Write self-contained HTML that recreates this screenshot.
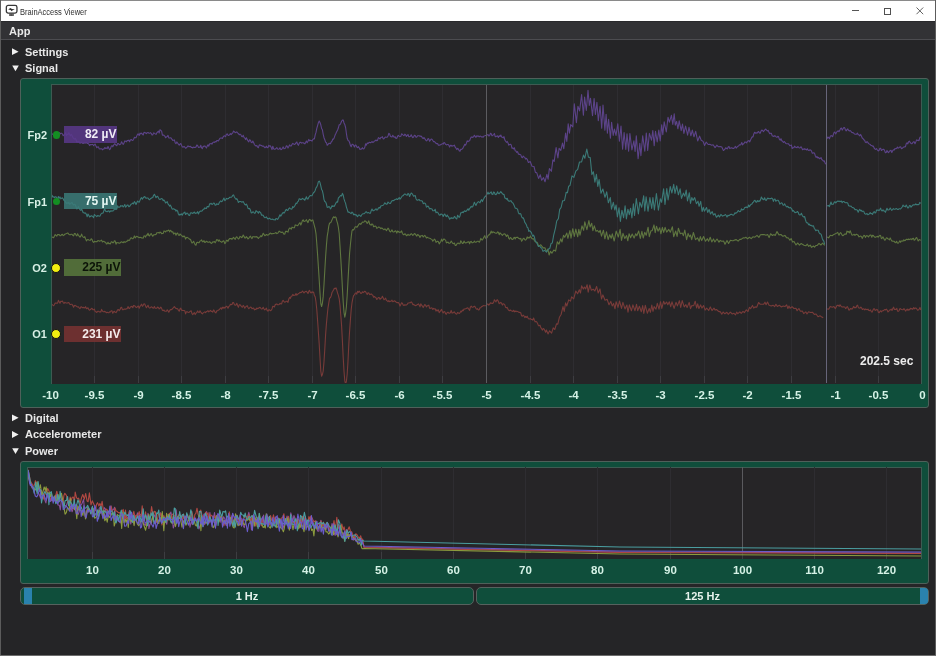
<!DOCTYPE html>
<html><head><meta charset="utf-8">
<style>
*{box-sizing:border-box}
html,body{margin:0;padding:0}
body{width:936px;height:656px;overflow:hidden;background:#252527;position:relative;font-family:"Liberation Sans",sans-serif}
.layer{position:absolute;left:0;top:0;width:936px;height:656px;will-change:transform}
.a{position:absolute}
.hdr{position:absolute;left:25px;font:bold 11px/12px "Liberation Sans",sans-serif;color:#e8e8e8;white-space:nowrap}
.tri-r{position:absolute;left:12px;width:0;height:0;border-top:3.5px solid transparent;border-bottom:3.5px solid transparent;border-left:6.5px solid #f0f0f0}
.tri-d{position:absolute;left:12px;width:0;height:0;border-left:3.3px solid transparent;border-right:3.3px solid transparent;border-top:6px solid #f0f0f0}
.frame{position:absolute;background:#0f4e3b;border:1px solid #4f605a;border-radius:3px}
.tk{position:absolute;width:60px;text-align:center;font:bold 11.5px/14px "Liberation Sans",sans-serif;color:#d5f2e6;white-space:nowrap}
.ch{position:absolute;width:30px;left:17px;text-align:right;font:bold 11px/12px "Liberation Sans",sans-serif;color:#d8f0e6}
.lbl{position:absolute;left:64px;height:16.5px;font:bold 12px/16.5px "Liberation Sans",sans-serif;text-align:right;padding-right:0.5px;white-space:nowrap}
.dot{position:absolute;border-radius:50%}
.slider{position:absolute;top:587px;height:18px;background:#0f4e3b;border:1px solid #56625e;border-radius:5px;font:bold 11px/16px "Liberation Sans",sans-serif;color:#e6f2ec;text-align:center}
</style></head><body><div class="layer">
<!-- window borders -->
<div class="a" style="left:0;top:0;width:936px;height:1px;background:#8a8a8a"></div>
<div class="a" style="left:0;top:0;width:1px;height:656px;background:#5c5c5c"></div>
<div class="a" style="left:935px;top:0;width:1px;height:656px;background:#5c5c5c"></div>
<div class="a" style="left:0;top:655px;width:936px;height:1px;background:#6c6c6c"></div>
<!-- title bar -->
<div class="a" style="left:1px;top:1px;width:934px;height:20px;background:#ffffff"></div>
<svg class="a" style="left:5px;top:4px" width="13" height="13" viewBox="0 0 13 13">
  <rect x="1.35" y="1.45" width="10.6" height="7.6" rx="1.8" fill="none" stroke="#383838" stroke-width="1.3"/>
  <path d="M3.2 5.4 L5.3 4 L7 4.9 L9.8 5.3 L7.3 6.5 L6.6 7.3 L5.6 5.9 Z" fill="#303030"/>
  <rect x="4.3" y="9.5" width="4.4" height="2.5" fill="#3a3a3a"/>
  <rect x="5.6" y="9.8" width="0.6" height="2" fill="#9a9a9a"/>
  <rect x="6.9" y="9.8" width="0.6" height="2" fill="#9a9a9a"/>
</svg>
<div class="a" style="left:20px;top:6.5px;font:8.5px/10px 'Liberation Sans',sans-serif;color:#2e2e2e;white-space:nowrap;transform:scaleX(0.885);transform-origin:0 0">BrainAccess Viewer</div>
<div class="a" style="left:851.5px;top:10px;width:7.5px;height:1px;background:#555"></div>
<div class="a" style="left:884px;top:7.5px;width:7px;height:7px;border:1px solid #505050"></div>
<svg class="a" style="left:915px;top:6px" width="10" height="10" viewBox="0 0 10 10"><path d="M1.5 1.5 L8.2 8.2 M8.2 1.5 L1.5 8.2" stroke="#505050" stroke-width="0.9"/></svg>
<!-- menu bar -->
<div class="a" style="left:1px;top:21px;width:934px;height:18px;background:#323235"></div>
<div class="a" style="left:1px;top:21px;width:934px;height:1px;background:#29292c"></div>
<div class="a" style="left:1px;top:39px;width:934px;height:1px;background:#4c4c50"></div>
<div class="a" style="left:9px;top:25px;font:bold 11px/12px 'Liberation Sans',sans-serif;color:#e8e8e8">App</div>

<!-- headers -->
<svg class="a" style="left:0;top:0" width="30" height="656"><polygon points="12,48.300000000000004 18.6,51.7 12,55.1" fill="#f0f0f0"/></svg><div class="hdr" style="top:46px">Settings</div>
<svg class="a" style="left:0;top:0" width="30" height="656"><polygon points="12.2,65.4 18.8,65.4 15.5,71.2" fill="#f0f0f0"/></svg><div class="hdr" style="top:62px">Signal</div>

<!-- signal frame -->
<div class="frame" style="left:20px;top:78px;width:909px;height:330px"></div>
<div class="a" style="left:51px;top:84px;width:871px;height:300px;background:#262527;border:1px solid #3d5b52;border-bottom:none"></div>
<svg width="870" height="298" style="position:absolute;left:52px;top:85px"><line x1="-1.5" y1="0" x2="-1.5" y2="298" stroke="#2e2d31" stroke-width="1"/><line x1="-1.5" y1="291" x2="-1.5" y2="298" stroke="#3d3d41" stroke-width="1"/><line x1="42.5" y1="0" x2="42.5" y2="298" stroke="#2e2d31" stroke-width="1"/><line x1="42.5" y1="291" x2="42.5" y2="298" stroke="#3d3d41" stroke-width="1"/><line x1="86.5" y1="0" x2="86.5" y2="298" stroke="#2e2d31" stroke-width="1"/><line x1="86.5" y1="291" x2="86.5" y2="298" stroke="#3d3d41" stroke-width="1"/><line x1="129.5" y1="0" x2="129.5" y2="298" stroke="#2e2d31" stroke-width="1"/><line x1="129.5" y1="291" x2="129.5" y2="298" stroke="#3d3d41" stroke-width="1"/><line x1="173.5" y1="0" x2="173.5" y2="298" stroke="#2e2d31" stroke-width="1"/><line x1="173.5" y1="291" x2="173.5" y2="298" stroke="#3d3d41" stroke-width="1"/><line x1="216.5" y1="0" x2="216.5" y2="298" stroke="#2e2d31" stroke-width="1"/><line x1="216.5" y1="291" x2="216.5" y2="298" stroke="#3d3d41" stroke-width="1"/><line x1="260.5" y1="0" x2="260.5" y2="298" stroke="#2e2d31" stroke-width="1"/><line x1="260.5" y1="291" x2="260.5" y2="298" stroke="#3d3d41" stroke-width="1"/><line x1="303.5" y1="0" x2="303.5" y2="298" stroke="#2e2d31" stroke-width="1"/><line x1="303.5" y1="291" x2="303.5" y2="298" stroke="#3d3d41" stroke-width="1"/><line x1="347.5" y1="0" x2="347.5" y2="298" stroke="#2e2d31" stroke-width="1"/><line x1="347.5" y1="291" x2="347.5" y2="298" stroke="#3d3d41" stroke-width="1"/><line x1="390.5" y1="0" x2="390.5" y2="298" stroke="#2e2d31" stroke-width="1"/><line x1="390.5" y1="291" x2="390.5" y2="298" stroke="#3d3d41" stroke-width="1"/><line x1="434.5" y1="0" x2="434.5" y2="298" stroke="#2e2d31" stroke-width="1"/><line x1="434.5" y1="291" x2="434.5" y2="298" stroke="#3d3d41" stroke-width="1"/><line x1="478.5" y1="0" x2="478.5" y2="298" stroke="#2e2d31" stroke-width="1"/><line x1="478.5" y1="291" x2="478.5" y2="298" stroke="#3d3d41" stroke-width="1"/><line x1="521.5" y1="0" x2="521.5" y2="298" stroke="#2e2d31" stroke-width="1"/><line x1="521.5" y1="291" x2="521.5" y2="298" stroke="#3d3d41" stroke-width="1"/><line x1="565.5" y1="0" x2="565.5" y2="298" stroke="#2e2d31" stroke-width="1"/><line x1="565.5" y1="291" x2="565.5" y2="298" stroke="#3d3d41" stroke-width="1"/><line x1="608.5" y1="0" x2="608.5" y2="298" stroke="#2e2d31" stroke-width="1"/><line x1="608.5" y1="291" x2="608.5" y2="298" stroke="#3d3d41" stroke-width="1"/><line x1="652.5" y1="0" x2="652.5" y2="298" stroke="#2e2d31" stroke-width="1"/><line x1="652.5" y1="291" x2="652.5" y2="298" stroke="#3d3d41" stroke-width="1"/><line x1="695.5" y1="0" x2="695.5" y2="298" stroke="#2e2d31" stroke-width="1"/><line x1="695.5" y1="291" x2="695.5" y2="298" stroke="#3d3d41" stroke-width="1"/><line x1="739.5" y1="0" x2="739.5" y2="298" stroke="#2e2d31" stroke-width="1"/><line x1="739.5" y1="291" x2="739.5" y2="298" stroke="#3d3d41" stroke-width="1"/><line x1="783.5" y1="0" x2="783.5" y2="298" stroke="#2e2d31" stroke-width="1"/><line x1="783.5" y1="291" x2="783.5" y2="298" stroke="#3d3d41" stroke-width="1"/><line x1="826.5" y1="0" x2="826.5" y2="298" stroke="#2e2d31" stroke-width="1"/><line x1="826.5" y1="291" x2="826.5" y2="298" stroke="#3d3d41" stroke-width="1"/><line x1="870.5" y1="0" x2="870.5" y2="298" stroke="#2e2d31" stroke-width="1"/><line x1="870.5" y1="291" x2="870.5" y2="298" stroke="#3d3d41" stroke-width="1"/><path d="M0.0 219.3 L0.8 220.1 L1.6 220.7 L2.4 219.6 L3.2 217.9 L4.0 218.2 L4.8 218.0 L5.6 218.1 L6.4 215.3 L7.2 216.9 L8.0 218.2 L8.8 216.2 L9.6 216.5 L10.4 216.1 L11.2 217.6 L12.0 218.3 L12.8 217.3 L13.6 217.7 L14.4 218.0 L15.2 218.1 L16.0 217.8 L16.8 217.5 L17.6 219.1 L18.4 219.6 L19.2 219.2 L20.0 219.3 L20.8 220.6 L21.6 222.2 L22.4 220.6 L23.2 220.4 L24.0 220.9 L24.8 221.5 L25.6 222.0 L26.4 221.8 L27.2 222.8 L28.0 223.7 L28.8 221.9 L29.6 221.8 L30.4 222.8 L31.2 222.4 L32.0 222.6 L32.8 222.9 L33.6 221.7 L34.4 223.6 L35.2 223.4 L36.0 222.8 L36.8 224.6 L37.6 225.2 L38.4 224.5 L39.2 223.8 L40.0 223.3 L40.8 224.6 L41.6 224.8 L42.4 224.2 L43.2 226.6 L44.0 226.7 L44.8 227.5 L45.6 226.2 L46.4 226.2 L47.2 226.9 L48.0 226.8 L48.8 227.0 L49.6 224.4 L50.4 226.0 L51.2 226.7 L52.0 226.6 L52.8 226.4 L53.6 226.9 L54.4 227.8 L55.2 227.3 L56.0 227.6 L56.8 227.8 L57.6 226.9 L58.4 227.0 L59.2 225.7 L60.0 225.9 L60.8 228.3 L61.6 226.8 L62.4 226.3 L63.2 227.3 L64.0 227.6 L64.8 226.4 L65.6 224.7 L66.4 224.5 L67.2 225.7 L68.0 224.7 L68.8 222.6 L69.6 222.3 L70.4 224.6 L71.2 224.8 L72.0 224.1 L72.8 224.1 L73.6 224.3 L74.4 223.7 L75.2 223.6 L76.0 221.6 L76.8 223.3 L77.6 223.6 L78.4 221.9 L79.2 221.6 L80.0 221.4 L80.8 222.7 L81.6 220.4 L82.4 220.8 L83.2 221.3 L84.0 222.3 L84.8 222.6 L85.6 221.2 L86.4 221.0 L87.2 223.2 L88.0 221.4 L88.8 220.4 L89.6 219.2 L90.4 221.3 L91.2 220.3 L92.0 218.8 L92.8 219.0 L93.6 221.1 L94.4 222.7 L95.2 221.5 L96.0 220.3 L96.8 222.3 L97.6 223.0 L98.4 222.8 L99.2 221.7 L100.0 222.2 L100.8 223.0 L101.6 223.1 L102.4 221.4 L103.2 223.3 L104.0 223.3 L104.8 223.1 L105.6 222.1 L106.4 222.4 L107.2 223.9 L108.0 223.3 L108.8 222.1 L109.6 223.4 L110.4 225.3 L111.2 225.7 L112.0 225.0 L112.8 226.2 L113.6 226.3 L114.4 226.3 L115.2 224.8 L116.0 225.9 L116.8 227.2 L117.6 225.8 L118.4 224.6 L119.2 224.8 L120.0 224.3 L120.8 223.4 L121.6 222.5 L122.4 221.7 L123.2 222.7 L124.0 223.5 L124.8 223.6 L125.6 223.8 L126.4 225.1 L127.2 226.2 L128.0 224.0 L128.8 223.2 L129.6 225.3 L130.4 225.4 L131.2 225.5 L132.0 225.5 L132.8 225.8 L133.6 228.9 L134.4 226.8 L135.2 226.8 L136.0 227.3 L136.8 227.5 L137.6 226.8 L138.4 226.3 L139.2 225.8 L140.0 228.7 L140.8 229.6 L141.6 228.3 L142.4 227.7 L143.2 229.6 L144.0 228.2 L144.8 227.5 L145.6 225.9 L146.4 227.2 L147.2 227.4 L148.0 225.8 L148.8 227.1 L149.6 228.3 L150.4 228.9 L151.2 227.9 L152.0 227.4 L152.8 226.9 L153.6 227.6 L154.4 226.6 L155.2 226.3 L156.0 225.7 L156.8 226.9 L157.6 226.2 L158.4 225.4 L159.2 226.4 L160.0 226.2 L160.8 227.1 L161.6 224.9 L162.4 225.9 L163.2 227.6 L164.0 227.9 L164.8 225.8 L165.6 225.8 L166.4 225.0 L167.2 224.8 L168.0 223.7 L168.8 222.9 L169.6 224.2 L170.4 222.2 L171.2 223.2 L172.0 222.2 L172.8 223.2 L173.6 222.2 L174.4 221.2 L175.2 221.7 L176.0 223.3 L176.8 221.5 L177.6 220.9 L178.4 219.2 L179.2 219.6 L180.0 219.5 L180.8 217.5 L181.6 217.6 L182.4 219.6 L183.2 220.3 L184.0 219.9 L184.8 218.2 L185.6 220.5 L186.4 222.3 L187.2 219.8 L188.0 219.7 L188.8 220.6 L189.6 221.8 L190.4 222.2 L191.2 220.4 L192.0 221.4 L192.8 223.2 L193.6 221.7 L194.4 221.4 L195.2 220.6 L196.0 222.5 L196.8 223.7 L197.6 222.9 L198.4 222.1 L199.2 222.3 L200.0 223.7 L200.8 223.3 L201.6 223.0 L202.4 224.9 L203.2 224.3 L204.0 224.6 L204.8 223.0 L205.6 223.7 L206.4 223.2 L207.2 222.7 L208.0 222.2 L208.8 223.3 L209.6 224.0 L210.4 223.8 L211.2 222.2 L212.0 224.0 L212.8 224.9 L213.6 224.2 L214.4 223.2 L215.2 225.5 L216.0 226.2 L216.8 224.9 L217.6 224.8 L218.4 225.7 L219.2 225.3 L220.0 223.9 L220.8 221.2 L221.6 221.5 L222.4 222.0 L223.2 219.7 L224.0 219.1 L224.8 219.0 L225.6 219.8 L226.4 219.7 L227.2 219.5 L228.0 218.3 L228.8 218.9 L229.6 218.9 L230.4 216.2 L231.2 215.4 L232.0 216.6 L232.8 217.2 L233.6 216.8 L234.4 216.2 L235.2 216.2 L236.0 217.4 L236.8 214.0 L237.6 212.4 L238.4 213.3 L239.2 211.2 L240.0 210.9 L240.8 209.4 L241.6 210.4 L242.4 210.2 L243.2 210.2 L244.0 208.6 L244.8 210.2 L245.6 209.4 L246.4 208.6 L247.2 208.3 L248.0 207.2 L248.8 207.7 L249.6 207.3 L250.4 206.0 L251.2 206.9 L252.0 208.0 L252.8 206.9 L253.6 206.5 L254.4 206.3 L255.2 207.4 L256.0 208.5 L256.8 206.2 L257.6 205.4 L258.4 207.5 L259.2 207.9 L260.0 206.8 L260.8 207.4 L261.6 207.1 L262.4 210.6 L263.2 211.8 L264.0 217.0 L264.8 224.8 L265.6 235.8 L266.4 247.2 L267.2 258.9 L268.0 273.0 L268.8 286.1 L269.6 291.2 L270.4 289.6 L271.2 286.0 L272.0 276.6 L272.8 264.0 L273.6 249.6 L274.4 239.1 L275.2 230.5 L276.0 222.8 L276.8 217.9 L277.6 213.0 L278.4 212.8 L279.2 210.9 L280.0 207.5 L280.8 206.2 L281.6 204.8 L282.4 203.2 L283.2 203.7 L284.0 202.8 L284.8 205.1 L285.6 208.1 L286.4 210.4 L287.2 213.8 L288.0 220.3 L288.8 230.4 L289.6 240.8 L290.4 255.9 L291.2 272.2 L292.0 286.3 L292.8 295.9 L293.6 298.9 L294.4 296.3 L295.2 289.0 L296.0 276.2 L296.8 259.5 L297.6 246.0 L298.4 234.9 L299.2 224.6 L300.0 217.8 L300.8 213.6 L301.6 210.5 L302.4 209.9 L303.2 208.3 L304.0 207.9 L304.8 209.2 L305.6 206.2 L306.4 207.4 L307.2 206.1 L308.0 207.2 L308.8 208.4 L309.6 208.3 L310.4 206.7 L311.2 207.6 L312.0 207.0 L312.8 206.2 L313.6 206.7 L314.4 208.2 L315.2 209.5 L316.0 207.7 L316.8 208.1 L317.6 209.6 L318.4 209.4 L319.2 208.9 L320.0 209.7 L320.8 210.2 L321.6 212.3 L322.4 211.5 L323.2 212.1 L324.0 212.7 L324.8 214.5 L325.6 213.6 L326.4 212.5 L327.2 212.5 L328.0 214.4 L328.8 213.3 L329.6 213.1 L330.4 211.2 L331.2 212.9 L332.0 214.7 L332.8 214.1 L333.6 213.1 L334.4 215.3 L335.2 215.9 L336.0 216.6 L336.8 215.7 L337.6 216.7 L338.4 216.2 L339.2 216.1 L340.0 215.2 L340.8 216.8 L341.6 216.5 L342.4 215.7 L343.2 216.2 L344.0 217.0 L344.8 217.6 L345.6 217.6 L346.4 217.5 L347.2 218.8 L348.0 221.1 L348.8 219.4 L349.6 217.8 L350.4 218.2 L351.2 220.0 L352.0 220.5 L352.8 219.7 L353.6 220.1 L354.4 220.0 L355.2 219.4 L356.0 218.0 L356.8 218.0 L357.6 217.8 L358.4 217.8 L359.2 216.9 L360.0 217.6 L360.8 219.6 L361.6 219.4 L362.4 220.0 L363.2 220.6 L364.0 220.4 L364.8 220.0 L365.6 219.6 L366.4 218.8 L367.2 220.1 L368.0 221.9 L368.8 218.8 L369.6 220.1 L370.4 221.1 L371.2 222.6 L372.0 221.0 L372.8 219.5 L373.6 220.3 L374.4 221.9 L375.2 220.9 L376.0 220.6 L376.8 220.1 L377.6 223.3 L378.4 223.4 L379.2 222.9 L380.0 223.0 L380.8 224.5 L381.6 223.4 L382.4 224.0 L383.2 223.7 L384.0 226.1 L384.8 224.8 L385.6 225.9 L386.4 224.9 L387.2 227.6 L388.0 226.7 L388.8 225.4 L389.6 224.4 L390.4 226.7 L391.2 228.0 L392.0 226.6 L392.8 226.8 L393.6 228.8 L394.4 229.2 L395.2 227.5 L396.0 227.2 L396.8 228.1 L397.6 228.3 L398.4 227.5 L399.2 225.4 L400.0 228.0 L400.8 228.0 L401.6 227.2 L402.4 226.9 L403.2 228.1 L404.0 229.0 L404.8 229.1 L405.6 227.4 L406.4 227.9 L407.2 228.5 L408.0 227.9 L408.8 226.1 L409.6 226.9 L410.4 225.1 L411.2 225.7 L412.0 224.1 L412.8 224.0 L413.6 223.7 L414.4 223.5 L415.2 222.8 L416.0 223.1 L416.8 224.2 L417.6 225.4 L418.4 222.0 L419.2 221.1 L420.0 222.3 L420.8 222.2 L421.6 221.7 L422.4 221.2 L423.2 222.0 L424.0 223.6 L424.8 224.2 L425.6 223.7 L426.4 225.0 L427.2 224.8 L428.0 222.8 L428.8 222.7 L429.6 221.5 L430.4 221.4 L431.2 220.6 L432.0 220.7 L432.8 220.7 L433.6 220.8 L434.4 220.6 L435.2 219.0 L436.0 219.1 L436.8 220.2 L437.6 219.2 L438.4 217.9 L439.2 218.1 L440.0 218.4 L440.8 218.4 L441.6 217.4 L442.4 214.7 L443.2 215.9 L444.0 216.8 L444.8 215.1 L445.6 214.9 L446.4 216.5 L447.2 218.7 L448.0 218.0 L448.8 217.3 L449.6 218.3 L450.4 220.1 L451.2 218.7 L452.0 219.0 L452.8 219.9 L453.6 222.3 L454.4 222.9 L455.2 222.4 L456.0 224.3 L456.8 225.3 L457.6 225.8 L458.4 225.0 L459.2 225.7 L460.0 226.0 L460.8 226.5 L461.6 225.3 L462.4 226.8 L463.2 226.0 L464.0 226.7 L464.8 226.1 L465.6 226.6 L466.4 226.9 L467.2 227.5 L468.0 227.3 L468.8 228.0 L469.6 230.8 L470.4 231.2 L471.2 230.2 L472.0 230.9 L472.8 232.6 L473.6 231.4 L474.4 232.5 L475.2 231.2 L476.0 233.1 L476.8 234.0 L477.6 233.9 L478.4 233.6 L479.2 234.5 L480.0 234.4 L480.8 235.1 L481.6 233.0 L482.4 235.2 L483.2 236.9 L484.0 236.4 L484.8 237.0 L485.6 238.4 L486.4 240.6 L487.2 240.7 L488.0 240.2 L488.8 242.6 L489.6 243.8 L490.4 245.1 L491.2 243.5 L492.0 244.0 L492.8 245.6 L493.6 247.3 L494.4 245.0 L496.0 248.9 L497.6 245.8 L499.6 248.1 L501.2 242.9 L502.8 244.5 L504.5 238.9 L505.8 239.1 L507.4 232.3 L509.1 229.5 L511.0 221.6 L512.2 226.4 L513.6 217.9 L514.8 221.0 L516.7 214.9 L518.5 216.1 L519.6 211.9 L521.7 213.8 L523.8 206.0 L525.6 208.7 L527.3 204.7 L528.5 208.0 L529.6 200.8 L531.3 204.1 L532.4 202.0 L533.7 203.9 L535.1 199.7 L536.2 207.2 L537.8 200.0 L539.3 205.2 L541.2 204.2 L542.9 206.0 L544.6 201.4 L546.2 208.0 L548.0 203.9 L549.5 214.0 L550.9 209.9 L553.0 215.2 L555.1 214.3 L557.0 219.8 L558.8 216.4 L560.2 220.9 L561.6 218.4 L563.0 223.8 L564.1 216.7 L566.0 222.4 L567.5 216.0 L569.5 223.4 L570.9 217.4 L573.0 223.9 L574.9 220.1 L576.0 227.2 L577.4 219.9 L579.4 225.8 L580.9 219.9 L583.0 225.7 L584.5 219.3 L585.7 225.7 L587.4 221.3 L589.3 226.8 L590.7 220.5 L591.8 228.4 L593.3 220.3 L595.3 228.2 L597.2 223.5 L598.4 227.3 L599.8 220.1 L601.0 226.3 L602.1 221.6 L604.0 224.2 L605.3 218.4 L607.0 224.2 L608.5 216.7 L609.8 223.4 L611.6 216.3 L612.9 219.2 L614.6 217.0 L615.8 219.7 L617.3 216.8 L618.7 221.6 L620.0 216.9 L622.1 223.4 L624.0 217.3 L625.4 220.9 L627.4 215.7 L628.7 222.5 L630.2 215.6 L632.2 221.9 L633.9 219.7 L635.1 222.6 L637.2 217.4 L638.5 223.6 L639.9 220.5 L641.7 220.7 L643.2 216.2 L644.6 223.0 L645.7 218.8 L646.9 223.5 L648.6 219.9 L649.9 223.1 L651.6 220.5 L653.1 225.1 L654.7 223.2 L656.7 225.5 L658.3 221.9 L660.0 225.6 L662.0 223.1 L663.2 225.1 L664.5 224.5 L666.5 226.4 L668.4 226.9 L669.8 229.2 L671.1 227.0 L672.9 228.8 L674.9 227.3 L676.2 229.3 L678.3 227.1 L680.3 229.0 L682.0 228.3 L683.5 229.9 L684.7 227.1 L685.8 228.7 L687.9 226.9 L689.2 228.3 L691.0 226.3 L692.4 227.6 L694.3 224.8 L696.0 226.5 L697.4 222.3 L698.7 223.6 L700.5 220.4 L701.7 223.1 L703.0 221.9 L704.7 222.3 L706.6 217.5 L708.3 219.3 L709.7 219.2 L711.7 219.1 L713.0 217.2 L714.1 219.7 L715.5 217.0 L717.1 220.2 L718.2 220.6 L719.5 220.9 L721.0 220.2 L722.6 221.7 L723.9 219.2 L725.3 221.4 L727.3 220.3 L729.4 222.0 L731.2 221.0 L732.9 221.6 L734.6 219.8 L735.9 223.5 L737.0 221.0 L738.1 223.2 L740.1 221.7 L741.9 223.5 L744.0 223.3 L745.1 225.7 L746.9 223.5 L748.4 226.3 L750.3 226.1 L751.7 228.6 L753.8 226.8 L755.0 228.9 L756.6 226.7 L758.4 227.5 L760.4 227.2 L762.3 229.4 L764.1 229.0 L766.0 231.7 L768.0 230.8 L769.4 231.7 L771.2 232.8 M775.0 224.0 L776.9 224.1 L778.2 221.4 L780.3 222.3 L781.9 221.6 L783.4 223.6 L785.1 220.2 L786.4 220.4 L787.2 221.4 L788.0 219.7 L788.8 220.9 L789.6 221.8 L790.4 222.1 L791.2 221.7 L792.0 222.0 L792.8 222.0 L793.6 223.6 L794.4 222.8 L795.2 221.5 L796.0 222.7 L796.8 225.0 L797.6 224.9 L798.4 223.6 L799.2 223.6 L800.0 224.2 L800.8 223.1 L801.6 221.4 L802.4 222.6 L803.2 222.4 L804.0 222.7 L804.8 220.7 L805.6 220.2 L806.4 222.7 L807.2 223.0 L808.0 223.1 L808.8 222.0 L809.6 222.9 L810.4 224.5 L811.2 223.8 L812.0 224.0 L812.8 224.8 L813.6 224.0 L814.4 224.4 L815.2 224.8 L816.0 224.1 L816.8 225.5 L817.6 225.6 L818.4 224.9 L819.2 226.3 L820.0 227.2 L820.8 225.6 L821.6 223.9 L822.4 223.7 L823.2 225.4 L824.0 225.1 L824.8 224.3 L825.6 225.0 L826.4 227.2 L827.2 227.7 L828.0 226.4 L828.8 225.8 L829.6 226.8 L830.4 225.7 L831.2 225.7 L832.0 225.1 L832.8 224.5 L833.6 224.9 L834.4 224.1 L835.2 225.3 L836.0 226.9 L836.8 226.1 L837.6 225.0 L838.4 224.9 L839.2 224.2 L840.0 225.5 L840.8 223.5 L841.6 222.2 L842.4 224.5 L843.2 224.3 L844.0 224.5 L844.8 223.3 L845.6 226.1 L846.4 226.3 L847.2 225.3 L848.0 223.5 L848.8 224.0 L849.6 224.4 L850.4 224.8 L851.2 224.6 L852.0 223.6 L852.8 224.7 L853.6 226.1 L854.4 224.9 L855.2 224.0 L856.0 225.5 L856.8 224.3 L857.6 224.9 L858.4 223.3 L859.2 223.9 L860.0 223.5 L860.8 224.4 L861.6 222.6 L862.4 223.8 L863.2 223.0 L864.0 223.1 L864.8 223.9 L865.6 225.3 L866.4 224.9 L867.2 224.2 L868.0 222.4 L868.8 225.0" stroke="#783b39" fill="none" stroke-width="1.1" stroke-linejoin="round"/><path d="M0.0 152.1 L0.8 152.2 L1.6 152.7 L2.4 151.3 L3.2 149.6 L4.0 150.3 L4.8 151.2 L5.6 149.6 L6.4 149.6 L7.2 149.6 L8.0 150.8 L8.8 150.6 L9.6 149.6 L10.4 149.3 L11.2 150.6 L12.0 150.2 L12.8 149.2 L13.6 148.9 L14.4 148.6 L15.2 148.1 L16.0 148.1 L16.8 149.3 L17.6 149.7 L18.4 149.8 L19.2 149.3 L20.0 149.3 L20.8 150.4 L21.6 150.9 L22.4 148.5 L23.2 148.6 L24.0 150.1 L24.8 150.9 L25.6 148.8 L26.4 150.3 L27.2 151.2 L28.0 152.2 L28.8 151.2 L29.6 149.1 L30.4 151.0 L31.2 152.1 L32.0 152.6 L32.8 151.6 L33.6 153.9 L34.4 155.9 L35.2 154.7 L36.0 154.6 L36.8 155.0 L37.6 155.2 L38.4 155.3 L39.2 153.8 L40.0 154.4 L40.8 156.6 L41.6 157.3 L42.4 156.3 L43.2 156.8 L44.0 156.6 L44.8 156.8 L45.6 155.8 L46.4 155.6 L47.2 156.1 L48.0 156.1 L48.8 155.6 L49.6 155.1 L50.4 157.0 L51.2 156.6 L52.0 156.3 L52.8 157.1 L53.6 157.2 L54.4 159.0 L55.2 158.7 L56.0 157.3 L56.8 158.8 L57.6 158.4 L58.4 158.9 L59.2 156.9 L60.0 156.8 L60.8 157.8 L61.6 157.6 L62.4 155.7 L63.2 156.1 L64.0 159.2 L64.8 157.5 L65.6 157.7 L66.4 157.7 L67.2 158.3 L68.0 158.0 L68.8 157.2 L69.6 156.8 L70.4 157.3 L71.2 157.7 L72.0 156.5 L72.8 157.3 L73.6 157.2 L74.4 156.3 L75.2 156.3 L76.0 154.9 L76.8 155.6 L77.6 155.3 L78.4 153.4 L79.2 152.8 L80.0 153.4 L80.8 153.8 L81.6 152.9 L82.4 150.9 L83.2 152.9 L84.0 151.9 L84.8 151.3 L85.6 151.7 L86.4 152.2 L87.2 152.7 L88.0 152.3 L88.8 152.5 L89.6 152.9 L90.4 153.0 L91.2 153.1 L92.0 150.9 L92.8 151.0 L93.6 152.1 L94.4 150.0 L95.2 150.2 L96.0 148.3 L96.8 150.5 L97.6 151.0 L98.4 149.2 L99.2 148.6 L100.0 150.1 L100.8 151.3 L101.6 149.9 L102.4 149.7 L103.2 149.6 L104.0 149.5 L104.8 147.8 L105.6 147.7 L106.4 147.5 L107.2 148.1 L108.0 147.1 L108.8 147.4 L109.6 148.7 L110.4 148.5 L111.2 148.4 L112.0 145.9 L112.8 146.2 L113.6 147.0 L114.4 145.7 L115.2 146.1 L116.0 145.4 L116.8 145.1 L117.6 146.9 L118.4 145.3 L119.2 146.0 L120.0 147.1 L120.8 146.7 L121.6 149.0 L122.4 148.2 L123.2 148.0 L124.0 150.2 L124.8 148.5 L125.6 148.0 L126.4 149.8 L127.2 150.5 L128.0 148.9 L128.8 149.9 L129.6 150.2 L130.4 151.6 L131.2 151.8 L132.0 150.9 L132.8 151.8 L133.6 154.1 L134.4 152.5 L135.2 152.4 L136.0 152.9 L136.8 153.4 L137.6 154.3 L138.4 154.2 L139.2 156.2 L140.0 158.0 L140.8 157.5 L141.6 156.3 L142.4 158.1 L143.2 159.8 L144.0 160.2 L144.8 157.5 L145.6 157.2 L146.4 157.8 L147.2 157.6 L148.0 156.1 L148.8 155.6 L149.6 154.9 L150.4 156.8 L151.2 156.6 L152.0 155.7 L152.8 157.4 L153.6 157.2 L154.4 156.2 L155.2 156.7 L156.0 157.2 L156.8 157.2 L157.6 156.7 L158.4 157.5 L159.2 158.5 L160.0 158.0 L160.8 156.9 L161.6 157.0 L162.4 156.5 L163.2 157.8 L164.0 156.3 L164.8 154.6 L165.6 154.9 L166.4 156.2 L167.2 154.9 L168.0 156.3 L168.8 156.6 L169.6 157.3 L170.4 156.8 L171.2 155.9 L172.0 156.1 L172.8 158.7 L173.6 157.9 L174.4 155.3 L175.2 155.4 L176.0 156.3 L176.8 154.6 L177.6 153.6 L178.4 153.6 L179.2 153.5 L180.0 154.3 L180.8 153.2 L181.6 152.4 L182.4 153.7 L183.2 154.4 L184.0 152.4 L184.8 151.8 L185.6 153.0 L186.4 154.0 L187.2 153.3 L188.0 151.4 L188.8 151.7 L189.6 152.6 L190.4 152.0 L191.2 150.0 L192.0 151.2 L192.8 153.0 L193.6 152.9 L194.4 151.6 L195.2 152.6 L196.0 154.0 L196.8 153.1 L197.6 152.0 L198.4 151.2 L199.2 152.6 L200.0 153.6 L200.8 151.6 L201.6 151.7 L202.4 151.9 L203.2 151.8 L204.0 151.9 L204.8 151.6 L205.6 152.6 L206.4 153.5 L207.2 152.3 L208.0 152.0 L208.8 150.7 L209.6 151.6 L210.4 150.4 L211.2 148.3 L212.0 149.3 L212.8 150.7 L213.6 150.2 L214.4 149.5 L215.2 150.2 L216.0 149.9 L216.8 149.7 L217.6 148.6 L218.4 148.0 L219.2 149.0 L220.0 148.6 L220.8 148.7 L221.6 148.5 L222.4 148.3 L223.2 148.0 L224.0 147.6 L224.8 148.6 L225.6 148.3 L226.4 147.3 L227.2 146.1 L228.0 146.8 L228.8 147.2 L229.6 147.4 L230.4 147.1 L231.2 147.9 L232.0 149.3 L232.8 149.0 L233.6 146.4 L234.4 146.4 L235.2 146.6 L236.0 147.1 L236.8 144.2 L237.6 143.1 L238.4 143.2 L239.2 144.2 L240.0 142.1 L240.8 142.6 L241.6 142.7 L242.4 142.8 L243.2 139.9 L244.0 140.3 L244.8 140.2 L245.6 140.7 L246.4 139.8 L247.2 138.4 L248.0 137.7 L248.8 140.0 L249.6 138.1 L250.4 135.7 L251.2 134.8 L252.0 136.5 L252.8 136.2 L253.6 135.8 L254.4 134.7 L255.2 136.4 L256.0 137.6 L256.8 135.3 L257.6 134.4 L258.4 135.0 L259.2 136.2 L260.0 135.2 L260.8 134.9 L261.6 137.9 L262.4 140.8 L263.2 144.0 L264.0 148.8 L264.8 158.7 L265.6 169.9 L266.4 182.1 L267.2 194.7 L268.0 208.0 L268.8 218.5 L269.6 221.5 L270.4 218.4 L271.2 211.4 L272.0 199.5 L272.8 185.5 L273.6 171.8 L274.4 160.8 L275.2 151.4 L276.0 146.7 L276.8 140.9 L277.6 138.0 L278.4 137.8 L279.2 136.8 L280.0 134.9 L280.8 133.1 L281.6 131.8 L282.4 132.7 L283.2 131.8 L284.0 132.5 L284.8 135.8 L285.6 138.4 L286.4 142.5 L287.2 148.5 L288.0 160.7 L288.8 173.8 L289.6 187.4 L290.4 202.7 L291.2 216.8 L292.0 227.3 L292.8 232.1 L293.6 228.3 L294.4 221.8 L295.2 210.3 L296.0 195.5 L296.8 181.1 L297.6 168.1 L298.4 159.7 L299.2 152.0 L300.0 145.8 L300.8 144.5 L301.6 145.0 L302.4 143.4 L303.2 141.7 L304.0 141.8 L304.8 142.3 L305.6 141.5 L306.4 140.1 L307.2 138.9 L308.0 138.5 L308.8 139.4 L309.6 138.2 L310.4 137.0 L311.2 137.3 L312.0 137.0 L312.8 135.8 L313.6 136.2 L314.4 137.0 L315.2 138.5 L316.0 137.2 L316.8 135.9 L317.6 139.0 L318.4 139.6 L319.2 140.2 L320.0 138.9 L320.8 139.4 L321.6 141.7 L322.4 141.5 L323.2 141.0 L324.0 141.4 L324.8 143.4 L325.6 142.9 L326.4 142.1 L327.2 142.1 L328.0 142.6 L328.8 143.7 L329.6 143.0 L330.4 143.3 L331.2 144.1 L332.0 144.7 L332.8 144.0 L333.6 144.3 L334.4 145.6 L335.2 144.5 L336.0 143.2 L336.8 144.2 L337.6 146.1 L338.4 147.0 L339.2 146.1 L340.0 144.9 L340.8 146.8 L341.6 147.0 L342.4 146.7 L343.2 145.8 L344.0 146.3 L344.8 148.1 L345.6 146.0 L346.4 146.4 L347.2 147.4 L348.0 147.1 L348.8 147.1 L349.6 145.9 L350.4 148.2 L351.2 149.6 L352.0 149.6 L352.8 148.8 L353.6 149.3 L354.4 150.7 L355.2 150.3 L356.0 149.3 L356.8 150.1 L357.6 150.3 L358.4 149.7 L359.2 148.6 L360.0 149.3 L360.8 150.5 L361.6 149.6 L362.4 148.6 L363.2 148.9 L364.0 150.2 L364.8 151.1 L365.6 149.6 L366.4 150.0 L367.2 150.8 L368.0 152.4 L368.8 150.7 L369.6 150.8 L370.4 150.4 L371.2 152.0 L372.0 151.2 L372.8 150.4 L373.6 151.5 L374.4 153.0 L375.2 152.2 L376.0 152.8 L376.8 153.0 L377.6 153.3 L378.4 153.5 L379.2 154.1 L380.0 154.6 L380.8 156.2 L381.6 155.4 L382.4 154.1 L383.2 154.8 L384.0 157.4 L384.8 156.6 L385.6 156.2 L386.4 156.7 L387.2 158.9 L388.0 157.6 L388.8 156.5 L389.6 154.1 L390.4 156.3 L391.2 154.9 L392.0 153.9 L392.8 154.6 L393.6 155.1 L394.4 157.9 L395.2 157.4 L396.0 157.1 L396.8 158.1 L397.6 158.2 L398.4 157.8 L399.2 156.1 L400.0 157.3 L400.8 158.4 L401.6 158.6 L402.4 158.0 L403.2 160.4 L404.0 160.5 L404.8 159.1 L405.6 158.2 L406.4 158.1 L407.2 158.8 L408.0 158.6 L408.8 155.7 L409.6 157.0 L410.4 158.5 L411.2 158.3 L412.0 156.1 L412.8 157.6 L413.6 157.9 L414.4 157.8 L415.2 157.1 L416.0 157.1 L416.8 156.6 L417.6 158.7 L418.4 156.8 L419.2 156.4 L420.0 157.7 L420.8 157.6 L421.6 157.2 L422.4 156.1 L423.2 157.3 L424.0 157.3 L424.8 156.6 L425.6 156.3 L426.4 156.2 L427.2 157.3 L428.0 155.9 L428.8 153.3 L429.6 154.7 L430.4 155.0 L431.2 153.6 L432.0 152.0 L432.8 150.7 L433.6 153.3 L434.4 153.2 L435.2 152.5 L436.0 150.6 L436.8 149.8 L437.6 149.8 L438.4 148.1 L439.2 146.1 L440.0 148.0 L440.8 146.9 L441.6 147.1 L442.4 147.4 L443.2 148.0 L444.0 148.2 L444.8 148.1 L445.6 146.9 L446.4 147.3 L447.2 149.7 L448.0 147.8 L448.8 148.7 L449.6 149.6 L450.4 150.3 L451.2 149.3 L452.0 149.0 L452.8 148.9 L453.6 149.9 L454.4 151.4 L455.2 149.9 L456.0 150.5 L456.8 153.4 L457.6 154.1 L458.4 152.5 L459.2 153.1 L460.0 154.5 L460.8 154.5 L461.6 153.0 L462.4 152.3 L463.2 154.0 L464.0 152.2 L464.8 152.5 L465.6 152.2 L466.4 153.2 L467.2 153.5 L468.0 154.0 L468.8 153.4 L469.6 156.3 L470.4 155.2 L471.2 153.5 L472.0 153.2 L472.8 154.8 L473.6 155.1 L474.4 154.2 L475.2 151.9 L476.0 153.2 L476.8 152.4 L477.6 152.9 L478.4 150.9 L479.2 152.4 L480.0 153.7 L480.8 153.9 L481.6 153.7 L482.4 155.5 L483.2 156.6 L484.0 157.1 L484.8 157.2 L485.6 158.2 L486.4 160.8 L487.2 160.5 L488.0 160.3 L488.8 159.8 L489.6 160.9 L491.2 162.9 L492.9 162.7 L494.7 166.9 L495.9 164.0 L497.1 170.0 L498.5 166.3 L499.9 168.2 L501.8 165.0 L503.6 166.1 L505.3 156.8 L507.0 159.1 L508.7 153.8 L510.0 157.0 L511.5 150.4 L512.8 152.3 L514.8 148.1 L515.9 153.3 L517.9 145.6 L519.0 153.1 L520.8 143.7 L522.3 151.5 L523.8 144.1 L525.7 151.8 L526.8 144.3 L528.0 150.1 L530.0 140.9 L531.6 145.3 L532.8 136.8 L534.9 144.7 L536.9 135.6 L538.1 142.0 L539.7 138.2 L540.9 145.6 L542.3 140.9 L544.0 146.3 L545.3 145.4 L547.1 147.3 L548.2 145.3 L549.5 151.1 L551.4 145.2 L552.9 153.8 L554.5 146.8 L556.1 154.5 L557.7 149.7 L559.2 153.3 L560.3 148.8 L562.2 156.0 L564.2 146.1 L566.3 152.0 L568.1 144.3 L569.5 155.4 L571.0 148.4 L572.8 153.5 L574.6 150.6 L575.8 155.8 L577.1 148.7 L578.6 152.8 L580.2 149.0 L582.1 153.1 L583.7 148.8 L584.8 150.7 L586.7 146.0 L588.3 153.5 L589.9 146.3 L591.2 153.0 L592.7 147.3 L594.2 150.3 L596.1 142.2 L597.3 151.7 L599.0 145.7 L600.2 145.6 L602.0 139.9 L603.2 147.7 L604.5 141.2 L606.0 146.2 L607.7 142.8 L608.9 148.8 L610.4 142.4 L611.7 147.4 L613.1 142.4 L614.7 147.1 L616.8 144.4 L618.3 147.3 L620.4 141.7 L621.7 151.8 L623.7 146.0 L625.1 151.4 L626.4 143.2 L628.3 148.8 L630.3 148.1 L631.4 150.7 L632.8 145.1 L634.6 154.6 L636.1 148.4 L637.4 151.7 L638.5 150.0 L639.7 154.7 L641.4 147.5 L643.5 154.7 L645.6 152.9 L647.2 156.2 L648.3 151.6 L649.7 155.6 L651.6 151.5 L653.5 156.3 L655.3 153.7 L656.6 156.2 L658.2 152.3 L659.8 156.9 L661.5 153.9 L662.9 157.0 L665.0 154.0 L667.0 157.1 L668.2 155.4 L669.6 156.3 L671.6 156.0 L673.0 159.3 L675.0 155.4 L676.6 158.5 L678.4 155.3 L680.2 155.7 L681.5 155.6 L682.9 154.9 L684.3 154.6 L686.1 156.1 L687.8 154.4 L689.1 154.4 L691.1 152.9 L692.6 153.0 L693.9 152.2 L695.5 153.8 L697.5 152.3 L699.2 153.6 L700.9 151.8 L702.9 152.2 L705.0 150.3 L706.9 152.4 L708.4 149.7 L710.1 149.6 L712.1 149.5 L714.0 150.2 L715.6 149.5 L717.1 152.6 L718.6 148.7 L720.4 150.5 L722.1 149.6 L723.2 150.5 L725.0 146.6 L727.0 149.9 L728.9 149.5 L730.9 151.3 L732.9 150.4 L734.5 152.6 L736.4 153.0 L737.9 155.2 L739.1 153.5 L740.6 157.1 L742.0 156.4 L744.0 159.9 L745.8 158.0 L747.4 160.1 L749.2 158.5 L750.4 159.3 L752.0 160.2 L753.8 160.8 L755.3 159.2 L756.7 161.4 L758.2 160.1 L759.6 162.4 L761.4 161.0 L762.6 162.1 L763.8 160.5 L765.2 160.4 L767.0 158.3 L768.9 160.0 L770.6 158.2 L772.7 160.4 M775.0 151.9 L776.6 152.9 L778.3 150.3 L780.1 150.8 L781.9 149.4 L783.9 148.6 L785.7 147.4 L787.0 150.2 L787.8 148.5 L788.6 147.6 L789.4 148.8 L790.2 150.2 L791.0 150.7 L791.8 150.0 L792.6 149.1 L793.4 149.0 L794.2 149.3 L795.0 146.0 L795.8 147.0 L796.6 146.6 L797.4 147.9 L798.2 145.8 L799.0 147.9 L799.8 149.9 L800.6 150.1 L801.4 149.8 L802.2 149.3 L803.0 150.3 L803.8 149.6 L804.6 149.2 L805.4 149.8 L806.2 150.3 L807.0 151.9 L807.8 151.4 L808.6 151.1 L809.4 151.4 L810.2 153.4 L811.0 151.8 L811.8 150.4 L812.6 150.5 L813.4 152.4 L814.2 151.0 L815.0 150.6 L815.8 151.2 L816.6 152.0 L817.4 150.4 L818.2 150.1 L819.0 150.1 L819.8 152.2 L820.6 150.2 L821.4 150.6 L822.2 151.7 L823.0 152.4 L823.8 152.0 L824.6 151.8 L825.4 151.3 L826.2 152.2 L827.0 151.2 L827.8 150.4 L828.6 150.6 L829.4 153.6 L830.2 153.1 L831.0 151.9 L831.8 153.4 L832.6 155.1 L833.4 154.9 L834.2 153.1 L835.0 152.8 L835.8 153.8 L836.6 154.0 L837.4 154.9 L838.2 152.9 L839.0 154.6 L839.8 156.0 L840.6 156.1 L841.4 156.3 L842.2 156.4 L843.0 157.4 L843.8 157.7 L844.6 156.3 L845.4 158.0 L846.2 158.3 L847.0 157.2 L847.8 155.8 L848.6 157.3 L849.4 156.0 L850.2 155.9 L851.0 156.2 L851.8 154.8 L852.6 155.6 L853.4 155.4 L854.2 154.4 L855.0 154.3 L855.8 154.8 L856.6 154.0 L857.4 154.6 L858.2 154.2 L859.0 153.8 L859.8 154.6 L860.6 153.6 L861.4 153.2 L862.2 155.2 L863.0 154.8 L863.8 153.2 L864.6 152.5 L865.4 154.3 L866.2 155.9 L867.0 154.9 L867.8 154.5 L868.6 155.5" stroke="#5f7640" fill="none" stroke-width="1.1" stroke-linejoin="round"/><path d="M0.0 109.9 L0.8 112.1 L1.6 111.8 L2.4 112.7 L3.2 111.7 L4.0 111.9 L4.8 113.0 L5.6 114.4 L6.4 111.5 L7.2 113.3 L8.0 111.9 L8.8 113.9 L9.6 113.2 L10.4 112.8 L11.2 113.8 L12.0 115.5 L12.8 115.7 L13.6 117.2 L14.4 118.4 L15.2 117.8 L16.0 118.4 L16.8 117.3 L17.6 119.2 L18.4 118.7 L19.2 118.0 L20.0 117.4 L20.8 119.1 L21.6 120.0 L22.4 119.3 L23.2 119.6 L24.0 121.7 L24.8 124.0 L25.6 123.2 L26.4 121.5 L27.2 123.4 L28.0 124.7 L28.8 125.3 L29.6 124.0 L30.4 125.8 L31.2 127.8 L32.0 127.7 L32.8 128.2 L33.6 127.9 L34.4 129.4 L35.2 131.7 L36.0 129.0 L36.8 130.2 L37.6 132.0 L38.4 131.6 L39.2 130.6 L40.0 131.1 L40.8 131.5 L41.6 132.7 L42.4 129.5 L43.2 130.4 L44.0 130.9 L44.8 131.7 L45.6 130.6 L46.4 130.8 L47.2 131.2 L48.0 130.9 L48.8 129.3 L49.6 128.2 L50.4 128.1 L51.2 127.9 L52.0 125.2 L52.8 124.2 L53.6 126.3 L54.4 126.4 L55.2 126.8 L56.0 126.0 L56.8 125.9 L57.6 127.1 L58.4 125.9 L59.2 126.3 L60.0 125.8 L60.8 126.1 L61.6 125.6 L62.4 123.9 L63.2 124.1 L64.0 124.4 L64.8 124.0 L65.6 120.9 L66.4 122.2 L67.2 122.1 L68.0 121.9 L68.8 120.6 L69.6 121.1 L70.4 120.6 L71.2 122.0 L72.0 121.0 L72.8 119.5 L73.6 122.1 L74.4 121.3 L75.2 120.1 L76.0 120.1 L76.8 121.8 L77.6 121.4 L78.4 120.1 L79.2 119.1 L80.0 118.8 L80.8 118.0 L81.6 118.8 L82.4 116.6 L83.2 117.5 L84.0 119.5 L84.8 117.7 L85.6 116.1 L86.4 116.7 L87.2 117.2 L88.0 115.4 L88.8 113.5 L89.6 112.7 L90.4 114.2 L91.2 112.8 L92.0 112.0 L92.8 111.5 L93.6 112.9 L94.4 113.1 L95.2 113.0 L96.0 113.0 L96.8 114.2 L97.6 114.7 L98.4 113.8 L99.2 113.3 L100.0 112.8 L100.8 112.5 L101.6 110.3 L102.4 109.3 L103.2 110.8 L104.0 112.7 L104.8 111.6 L105.6 111.3 L106.4 112.8 L107.2 114.3 L108.0 114.5 L108.8 113.9 L109.6 113.6 L110.4 113.9 L111.2 115.7 L112.0 115.0 L112.8 116.2 L113.6 118.0 L114.4 117.3 L115.2 116.6 L116.0 118.9 L116.8 119.8 L117.6 121.1 L118.4 120.2 L119.2 121.7 L120.0 123.9 L120.8 124.1 L121.6 123.7 L122.4 124.4 L123.2 124.6 L124.0 126.2 L124.8 125.1 L125.6 126.0 L126.4 129.0 L127.2 130.2 L128.0 129.0 L128.8 129.9 L129.6 128.9 L130.4 130.1 L131.2 128.1 L132.0 127.9 L132.8 127.0 L133.6 129.5 L134.4 128.7 L135.2 128.0 L136.0 128.9 L136.8 130.3 L137.6 130.5 L138.4 128.1 L139.2 127.7 L140.0 128.0 L140.8 128.5 L141.6 127.7 L142.4 127.0 L143.2 128.4 L144.0 128.1 L144.8 128.0 L145.6 126.7 L146.4 128.9 L147.2 127.2 L148.0 126.3 L148.8 126.1 L149.6 126.1 L150.4 125.7 L151.2 124.3 L152.0 124.1 L152.8 122.9 L153.6 123.4 L154.4 123.5 L155.2 121.5 L156.0 121.6 L156.8 121.9 L157.6 118.9 L158.4 118.9 L159.2 118.3 L160.0 119.5 L160.8 119.0 L161.6 118.0 L162.4 118.2 L163.2 120.3 L164.0 120.0 L164.8 118.7 L165.6 119.2 L166.4 119.5 L167.2 117.8 L168.0 116.6 L168.8 115.9 L169.6 116.7 L170.4 116.1 L171.2 114.6 L172.0 113.1 L172.8 115.7 L173.6 115.0 L174.4 113.4 L175.2 113.9 L176.0 113.8 L176.8 113.2 L177.6 112.4 L178.4 112.3 L179.2 112.3 L180.0 111.6 L180.8 110.3 L181.6 109.9 L182.4 112.0 L183.2 113.2 L184.0 114.3 L184.8 113.7 L185.6 115.1 L186.4 117.5 L187.2 116.6 L188.0 116.5 L188.8 116.5 L189.6 117.1 L190.4 117.0 L191.2 116.5 L192.0 118.1 L192.8 119.5 L193.6 119.9 L194.4 119.1 L195.2 120.7 L196.0 123.3 L196.8 123.8 L197.6 123.4 L198.4 125.0 L199.2 127.9 L200.0 127.8 L200.8 126.8 L201.6 127.0 L202.4 128.2 L203.2 128.1 L204.0 125.6 L204.8 126.5 L205.6 126.9 L206.4 128.2 L207.2 126.4 L208.0 127.2 L208.8 128.0 L209.6 130.3 L210.4 130.1 L211.2 130.2 L212.0 131.9 L212.8 132.7 L213.6 132.5 L214.4 131.9 L215.2 133.2 L216.0 134.0 L216.8 133.6 L217.6 133.1 L218.4 134.1 L219.2 134.3 L220.0 134.5 L220.8 134.1 L221.6 134.7 L222.4 134.8 L223.2 135.1 L224.0 133.6 L224.8 133.8 L225.6 134.4 L226.4 133.2 L227.2 131.5 L228.0 129.8 L228.8 131.1 L229.6 129.8 L230.4 128.3 L231.2 127.4 L232.0 128.1 L232.8 127.0 L233.6 125.2 L234.4 124.4 L235.2 125.4 L236.0 125.3 L236.8 123.6 L237.6 122.9 L238.4 123.8 L239.2 124.1 L240.0 123.9 L240.8 121.5 L241.6 122.4 L242.4 121.5 L243.2 120.1 L244.0 118.1 L244.8 118.6 L245.6 116.8 L246.4 116.1 L247.2 113.7 L248.0 114.0 L248.8 114.7 L249.6 114.2 L250.4 113.4 L251.2 114.1 L252.0 114.0 L252.8 115.3 L253.6 113.6 L254.4 111.8 L255.2 114.0 L256.0 114.0 L256.8 112.3 L257.6 111.2 L258.4 110.5 L259.2 110.8 L260.0 110.8 L260.8 108.9 L261.6 107.5 L262.4 107.0 L263.2 105.4 L264.0 102.8 L264.8 101.9 L265.6 99.9 L266.4 96.6 L267.2 96.1 L268.0 97.6 L268.8 100.9 L269.6 104.5 L270.4 105.8 L271.2 109.3 L272.0 114.6 L272.8 116.5 L273.6 116.9 L274.4 119.0 L275.2 122.3 L276.0 122.4 L276.8 121.6 L277.6 121.9 L278.4 123.9 L279.2 122.9 L280.0 120.7 L280.8 121.5 L281.6 121.1 L282.4 121.3 L283.2 119.4 L284.0 117.8 L284.8 116.9 L285.6 117.1 L286.4 112.9 L287.2 112.3 L288.0 111.2 L288.8 110.5 L289.6 111.0 L290.4 108.4 L291.2 110.0 L292.0 113.9 L292.8 116.4 L293.6 118.4 L294.4 122.1 L295.2 124.4 L296.0 127.2 L296.8 127.0 L297.6 127.4 L298.4 128.2 L299.2 128.6 L300.0 127.1 L300.8 127.8 L301.6 129.7 L302.4 129.2 L303.2 130.0 L304.0 129.5 L304.8 130.9 L305.6 131.7 L306.4 130.0 L307.2 130.0 L308.0 130.7 L308.8 131.4 L309.6 130.0 L310.4 129.0 L311.2 128.8 L312.0 128.7 L312.8 128.1 L313.6 127.0 L314.4 126.7 L315.2 127.9 L316.0 127.8 L316.8 127.6 L317.6 128.3 L318.4 128.3 L319.2 125.7 L320.0 124.1 L320.8 125.6 L321.6 125.8 L322.4 125.0 L323.2 124.8 L324.0 123.7 L324.8 125.1 L325.6 124.7 L326.4 123.1 L327.2 122.3 L328.0 123.2 L328.8 121.0 L329.6 120.7 L330.4 120.5 L331.2 120.3 L332.0 119.2 L332.8 117.8 L333.6 118.5 L334.4 119.3 L335.2 119.0 L336.0 117.0 L336.8 117.9 L337.6 118.4 L338.4 118.5 L339.2 116.9 L340.0 115.8 L340.8 115.5 L341.6 115.7 L342.4 115.0 L343.2 114.6 L344.0 114.1 L344.8 113.9 L345.6 114.5 L346.4 113.7 L347.2 112.5 L348.0 114.2 L348.8 113.2 L349.6 112.0 L350.4 110.8 L351.2 110.8 L352.0 109.5 L352.8 109.0 L353.6 109.3 L354.4 110.0 L355.2 110.3 L356.0 108.4 L356.8 109.0 L357.6 111.5 L358.4 109.6 L359.2 108.0 L360.0 108.5 L360.8 109.7 L361.6 111.3 L362.4 110.7 L363.2 110.5 L364.0 113.7 L364.8 115.0 L365.6 115.3 L366.4 114.7 L367.2 114.6 L368.0 115.7 L368.8 115.8 L369.6 115.7 L370.4 116.2 L371.2 118.7 L372.0 118.2 L372.8 118.0 L373.6 118.9 L374.4 122.1 L375.2 121.6 L376.0 121.0 L376.8 122.3 L377.6 124.0 L378.4 123.6 L379.2 123.8 L380.0 124.0 L380.8 125.8 L381.6 125.7 L382.4 125.6 L383.2 124.3 L384.0 127.8 L384.8 127.1 L385.6 127.2 L386.4 128.5 L387.2 129.9 L388.0 130.1 L388.8 129.1 L389.6 129.1 L390.4 129.7 L391.2 131.5 L392.0 129.7 L392.8 129.0 L393.6 130.8 L394.4 131.6 L395.2 130.0 L396.0 131.5 L396.8 132.2 L397.6 134.3 L398.4 133.4 L399.2 132.7 L400.0 133.5 L400.8 133.1 L401.6 133.3 L402.4 131.4 L403.2 132.2 L404.0 133.5 L404.8 134.0 L405.6 130.2 L406.4 131.4 L407.2 132.4 L408.0 130.9 L408.8 127.7 L409.6 127.8 L410.4 127.0 L411.2 127.6 L412.0 126.4 L412.8 125.8 L413.6 126.5 L414.4 126.0 L415.2 124.9 L416.0 123.8 L416.8 125.3 L417.6 123.6 L418.4 122.6 L419.2 121.3 L420.0 122.2 L420.8 121.5 L421.6 119.5 L422.4 117.3 L423.2 118.9 L424.0 120.4 L424.8 118.5 L425.6 117.3 L426.4 116.6 L427.2 117.1 L428.0 117.8 L428.8 115.8 L429.6 114.6 L430.4 116.6 L431.2 114.6 L432.0 113.2 L432.8 111.7 L433.6 111.4 L434.4 109.6 L435.2 109.0 L436.0 107.1 L436.8 109.0 L437.6 108.3 L438.4 107.7 L439.2 106.8 L440.0 109.3 L440.8 109.5 L441.6 107.0 L442.4 107.5 L443.2 109.5 L444.0 109.6 L444.8 108.6 L445.6 106.7 L446.4 108.5 L447.2 108.7 L448.0 107.6 L448.8 106.6 L449.6 107.6 L450.4 108.8 L451.2 109.4 L452.0 109.4 L452.8 112.9 L453.6 113.2 L454.4 114.2 L455.2 113.3 L456.0 115.5 L456.8 116.1 L457.6 116.2 L458.4 115.7 L459.2 115.9 L460.0 117.4 L460.8 117.9 L461.6 119.2 L462.4 121.1 L463.2 123.1 L464.0 123.3 L464.8 123.5 L465.6 124.4 L466.4 127.7 L467.2 128.9 L468.0 128.6 L468.8 129.0 L469.6 131.7 L470.4 132.9 L471.2 132.8 L472.0 134.5 L472.8 137.4 L473.6 138.4 L474.4 139.8 L475.2 142.3 L476.0 142.9 L476.8 146.5 L477.6 145.6 L478.4 146.3 L479.2 147.3 L480.0 149.4 L480.8 151.2 L481.6 150.2 L482.4 151.9 L483.2 155.9 L484.0 157.0 L484.8 158.1 L485.6 159.6 L486.4 161.5 L487.2 161.3 L488.0 161.2 L488.8 162.8 L489.6 162.9 L491.0 166.4 L492.7 165.3 L494.5 167.0 L496.5 164.0 L497.8 163.4 L499.1 158.4 L500.3 158.0 L501.7 150.2 L503.5 142.8 L504.7 136.0 L506.4 133.7 L507.7 124.4 L509.1 122.5 L510.6 115.9 L512.5 115.5 L514.2 107.2 L515.4 107.8 L516.7 101.2 L518.0 100.5 L520.0 90.8 L521.9 92.4 L523.8 86.2 L525.7 84.3 L527.5 77.0 L529.6 76.9 L531.5 70.1 L532.8 73.3 L534.8 64.0 L536.4 72.1 L538.2 72.5 L539.9 89.6 L541.4 86.8 L542.9 97.1 L544.4 89.4 L545.8 101.4 L547.1 94.6 L549.0 108.3 L550.9 104.1 L553.0 112.3 L554.7 106.8 L556.4 117.8 L558.3 112.6 L559.5 124.2 L561.3 117.3 L562.8 125.0 L564.1 120.0 L565.4 132.0 L567.0 122.9 L568.4 136.5 L569.9 125.2 L571.6 132.8 L573.1 120.9 L574.4 133.9 L575.9 124.2 L577.3 129.6 L578.6 123.2 L579.9 132.9 L581.4 118.8 L582.5 130.5 L584.3 113.5 L586.4 128.9 L587.8 117.3 L589.7 122.2 L591.7 110.7 L592.8 126.0 L594.1 111.9 L596.0 126.3 L597.9 112.6 L599.7 123.5 L600.9 112.6 L602.4 125.0 L604.4 108.5 L606.4 125.2 L608.3 113.8 L609.6 117.3 L611.6 103.9 L613.0 119.5 L614.8 103.6 L616.1 115.0 L618.2 101.5 L619.9 108.0 L621.7 99.4 L623.0 108.4 L624.7 100.8 L626.4 109.8 L628.1 103.9 L629.5 113.4 L631.4 108.1 L632.8 111.3 L634.2 105.1 L635.5 116.0 L637.3 107.7 L638.5 118.5 L639.8 112.5 L641.0 115.4 L642.7 112.6 L644.4 118.7 L646.0 116.2 L647.1 121.3 L648.7 116.4 L650.1 126.5 L651.3 122.4 L652.4 126.2 L654.5 122.5 L655.7 127.4 L657.1 124.5 L658.5 129.0 L660.2 126.6 L661.4 130.0 L663.0 128.7 L664.4 132.3 L666.4 130.1 L667.5 132.0 L668.9 129.4 L670.5 131.1 L672.6 130.2 L673.4 129.5 L674.2 130.5 L675.0 132.1 L675.8 130.4 L676.6 130.6 L677.4 130.4 L678.2 129.8 L679.0 129.2 L679.8 129.4 L680.6 130.0 L681.4 130.1 L682.2 129.3 L683.0 127.8 L683.8 128.4 L684.6 127.6 L685.4 127.0 L686.2 125.5 L687.0 126.2 L687.8 126.8 L688.6 126.3 L689.4 123.8 L690.2 124.9 L691.0 124.6 L691.8 124.4 L692.6 122.6 L693.4 122.5 L694.2 121.8 L695.0 122.7 L695.8 122.3 L696.6 120.0 L697.4 121.7 L698.2 120.4 L699.0 119.3 L699.8 119.3 L700.6 117.7 L701.4 117.1 L702.2 115.7 L703.0 115.3 L703.8 117.0 L704.6 117.3 L705.4 115.5 L706.2 116.6 L707.0 115.8 L707.8 116.3 L708.6 114.6 L709.4 112.0 L710.2 113.4 L711.0 114.4 L711.8 114.8 L712.6 112.7 L713.4 114.8 L714.2 115.5 L715.0 114.1 L715.8 113.0 L716.6 113.6 L717.4 113.8 L718.2 113.5 L719.0 113.6 L719.8 113.0 L720.6 113.9 L721.4 116.4 L722.2 114.3 L723.0 114.0 L723.8 116.2 L724.6 115.6 L725.4 115.3 L726.2 115.2 L727.0 116.7 L727.8 119.1 L728.6 118.5 L729.4 117.8 L730.2 118.3 L731.0 120.1 L731.8 120.2 L732.6 118.8 L733.4 120.3 L734.2 121.5 L735.0 121.9 L735.8 121.3 L736.6 122.6 L737.4 122.9 L738.2 122.4 L739.0 123.2 L739.8 124.0 L740.6 126.2 L741.4 125.5 L742.2 126.7 L743.0 127.7 L743.8 127.4 L744.6 127.3 L745.4 126.5 L746.2 127.3 L747.0 129.6 L747.8 130.0 L748.6 129.8 L749.4 128.3 L750.2 130.2 L751.0 131.6 L751.8 132.0 L752.6 131.5 L753.4 134.5 L754.2 137.1 L755.0 138.0 L755.8 137.9 L756.6 139.8 L757.4 139.2 L758.2 140.4 L759.0 140.2 L759.8 140.9 L760.6 141.1 L761.4 140.7 L762.2 143.2 L763.0 144.3 L763.8 145.7 L764.6 145.1 L765.4 145.3 L766.2 145.2 L767.0 147.5 L767.8 148.6 L768.6 148.7 L769.4 150.1 L770.2 153.2 L771.0 155.2 L771.8 156.2 L772.6 159.4 M775.0 121.1 L775.8 120.6 L776.6 120.6 L777.4 121.6 L778.2 119.3 L779.0 117.0 L779.8 119.4 L780.6 119.3 L781.4 119.1 L782.2 117.2 L783.0 116.7 L783.8 118.0 L784.6 116.9 L785.4 116.1 L786.2 116.4 L787.0 116.0 L787.8 116.6 L788.6 116.4 L789.4 116.1 L790.2 117.7 L791.0 116.5 L791.8 116.5 L792.6 117.2 L793.4 117.8 L794.2 117.8 L795.0 117.6 L795.8 118.2 L796.6 120.8 L797.4 120.9 L798.2 121.2 L799.0 121.0 L799.8 122.1 L800.6 122.6 L801.4 122.7 L802.2 123.4 L803.0 124.6 L803.8 124.5 L804.6 124.8 L805.4 125.2 L806.2 127.2 L807.0 125.4 L807.8 124.4 L808.6 125.8 L809.4 125.3 L810.2 126.6 L811.0 126.1 L811.8 126.4 L812.6 128.6 L813.4 129.1 L814.2 129.0 L815.0 128.5 L815.8 129.6 L816.6 129.4 L817.4 128.9 L818.2 127.6 L819.0 128.6 L819.8 128.6 L820.6 129.3 L821.4 127.3 L822.2 126.6 L823.0 128.0 L823.8 127.7 L824.6 125.0 L825.4 125.1 L826.2 125.0 L827.0 125.6 L827.8 124.5 L828.6 123.2 L829.4 125.6 L830.2 126.0 L831.0 124.8 L831.8 126.0 L832.6 126.1 L833.4 127.3 L834.2 125.2 L835.0 123.2 L835.8 124.9 L836.6 125.0 L837.4 124.5 L838.2 123.0 L839.0 124.3 L839.8 125.4 L840.6 124.5 L841.4 123.6 L842.2 124.3 L843.0 124.2 L843.8 123.8 L844.6 123.5 L845.4 124.4 L846.2 124.5 L847.0 123.8 L847.8 123.8 L848.6 124.0 L849.4 123.0 L850.2 122.0 L851.0 120.1 L851.8 121.3 L852.6 121.2 L853.4 121.8 L854.2 120.0 L855.0 121.4 L855.8 123.0 L856.6 122.8 L857.4 120.6 L858.2 120.6 L859.0 122.3 L859.8 121.2 L860.6 120.3 L861.4 119.7 L862.2 119.9 L863.0 119.8 L863.8 118.9 L864.6 119.8 L865.4 119.5 L866.2 119.6 L867.0 119.4 L867.8 117.4 L868.6 118.5" stroke="#3b7a77" fill="none" stroke-width="1.1" stroke-linejoin="round"/><path d="M0.0 48.7 L0.8 49.2 L1.6 49.8 L2.4 49.7 L3.2 49.9 L4.0 49.1 L4.8 50.5 L5.6 48.8 L6.4 47.5 L7.2 47.6 L8.0 49.1 L8.8 48.2 L9.6 48.3 L10.4 48.9 L11.2 50.7 L12.0 50.0 L12.8 49.3 L13.6 47.7 L14.4 50.5 L15.2 49.2 L16.0 49.5 L16.8 47.8 L17.6 49.5 L18.4 50.7 L19.2 49.4 L20.0 50.5 L20.8 52.3 L21.6 53.3 L22.4 54.2 L23.2 53.3 L24.0 54.8 L24.8 57.0 L25.6 56.7 L26.4 56.9 L27.2 56.9 L28.0 58.3 L28.8 57.6 L29.6 57.3 L30.4 58.3 L31.2 58.5 L32.0 57.7 L32.8 58.1 L33.6 57.9 L34.4 57.6 L35.2 58.4 L36.0 58.5 L36.8 59.1 L37.6 60.6 L38.4 59.5 L39.2 59.7 L40.0 59.4 L40.8 59.5 L41.6 60.7 L42.4 59.6 L43.2 59.1 L44.0 61.0 L44.8 62.7 L45.6 62.0 L46.4 61.9 L47.2 63.8 L48.0 64.1 L48.8 63.8 L49.6 63.7 L50.4 64.8 L51.2 64.0 L52.0 63.9 L52.8 62.5 L53.6 63.4 L54.4 63.0 L55.2 63.6 L56.0 61.5 L56.8 63.3 L57.6 64.6 L58.4 63.9 L59.2 61.3 L60.0 60.6 L60.8 61.8 L61.6 60.3 L62.4 58.9 L63.2 59.1 L64.0 60.2 L64.8 60.7 L65.6 58.5 L66.4 58.5 L67.2 59.6 L68.0 59.6 L68.8 58.8 L69.6 56.8 L70.4 58.3 L71.2 59.4 L72.0 58.0 L72.8 55.9 L73.6 56.3 L74.4 56.8 L75.2 55.4 L76.0 55.7 L76.8 55.1 L77.6 56.8 L78.4 54.9 L79.2 54.5 L80.0 55.2 L80.8 55.5 L81.6 54.2 L82.4 52.4 L83.2 52.6 L84.0 52.7 L84.8 50.9 L85.6 49.1 L86.4 49.1 L87.2 50.5 L88.0 48.1 L88.8 48.9 L89.6 48.1 L90.4 49.2 L91.2 50.0 L92.0 47.3 L92.8 47.5 L93.6 48.0 L94.4 48.6 L95.2 47.7 L96.0 47.5 L96.8 48.2 L97.6 48.3 L98.4 47.6 L99.2 48.3 L100.0 49.9 L100.8 49.9 L101.6 47.9 L102.4 48.2 L103.2 48.9 L104.0 49.4 L104.8 47.8 L105.6 47.0 L106.4 46.1 L107.2 48.0 L108.0 44.7 L108.8 45.4 L109.6 46.1 L110.4 50.1 L111.2 50.0 L112.0 50.3 L112.8 51.1 L113.6 52.8 L114.4 51.9 L115.2 51.6 L116.0 50.4 L116.8 52.9 L117.6 53.0 L118.4 52.8 L119.2 53.0 L120.0 54.4 L120.8 55.4 L121.6 55.2 L122.4 54.9 L123.2 57.8 L124.0 58.7 L124.8 56.9 L125.6 58.0 L126.4 59.2 L127.2 60.2 L128.0 59.1 L128.8 58.5 L129.6 60.4 L130.4 62.0 L131.2 62.1 L132.0 61.4 L132.8 62.2 L133.6 63.3 L134.4 62.8 L135.2 61.9 L136.0 60.8 L136.8 61.6 L137.6 61.6 L138.4 61.2 L139.2 62.4 L140.0 62.3 L140.8 63.0 L141.6 62.1 L142.4 62.5 L143.2 62.4 L144.0 62.0 L144.8 60.0 L145.6 60.5 L146.4 62.4 L147.2 62.2 L148.0 62.2 L148.8 60.3 L149.6 62.8 L150.4 63.6 L151.2 61.3 L152.0 61.4 L152.8 60.9 L153.6 61.8 L154.4 63.0 L155.2 61.1 L156.0 59.8 L156.8 61.2 L157.6 58.8 L158.4 58.7 L159.2 58.4 L160.0 59.1 L160.8 57.6 L161.6 57.1 L162.4 57.4 L163.2 56.5 L164.0 57.0 L164.8 55.5 L165.6 55.6 L166.4 55.9 L167.2 54.5 L168.0 53.2 L168.8 53.0 L169.6 53.0 L170.4 53.5 L171.2 51.8 L172.0 51.0 L172.8 50.9 L173.6 51.6 L174.4 49.2 L175.2 48.9 L176.0 50.2 L176.8 50.5 L177.6 49.6 L178.4 48.6 L179.2 49.6 L180.0 48.5 L180.8 47.8 L181.6 46.1 L182.4 46.7 L183.2 47.8 L184.0 47.3 L184.8 46.9 L185.6 47.8 L186.4 48.6 L187.2 49.8 L188.0 49.1 L188.8 49.6 L189.6 51.4 L190.4 51.8 L191.2 50.3 L192.0 52.4 L192.8 53.1 L193.6 54.6 L194.4 52.7 L195.2 54.6 L196.0 55.9 L196.8 56.9 L197.6 54.8 L198.4 55.2 L199.2 57.3 L200.0 57.7 L200.8 56.1 L201.6 57.5 L202.4 59.5 L203.2 60.5 L204.0 60.9 L204.8 60.6 L205.6 62.1 L206.4 62.7 L207.2 60.1 L208.0 59.9 L208.8 60.4 L209.6 60.5 L210.4 61.3 L211.2 61.0 L212.0 61.6 L212.8 62.8 L213.6 62.4 L214.4 61.2 L215.2 62.7 L216.0 62.5 L216.8 60.3 L217.6 61.1 L218.4 60.9 L219.2 62.6 L220.0 64.6 L220.8 61.2 L221.6 63.7 L222.4 64.3 L223.2 64.2 L224.0 63.5 L224.8 62.6 L225.6 64.0 L226.4 64.3 L227.2 64.0 L228.0 62.7 L228.8 64.6 L229.6 64.4 L230.4 63.2 L231.2 61.9 L232.0 63.8 L232.8 63.5 L233.6 62.8 L234.4 60.7 L235.2 61.2 L236.0 63.1 L236.8 61.6 L237.6 59.9 L238.4 61.0 L239.2 61.0 L240.0 59.4 L240.8 58.4 L241.6 59.1 L242.4 59.4 L243.2 59.1 L244.0 57.8 L244.8 57.0 L245.6 59.2 L246.4 60.3 L247.2 58.4 L248.0 57.4 L248.8 57.3 L249.6 58.1 L250.4 57.7 L251.2 57.7 L252.0 58.3 L252.8 58.9 L253.6 57.6 L254.4 56.1 L255.2 57.7 L256.0 56.3 L256.8 54.4 L257.6 55.8 L258.4 55.3 L259.2 55.5 L260.0 56.1 L260.8 54.6 L261.6 53.9 L262.4 53.9 L263.2 49.9 L264.0 47.4 L264.8 43.3 L265.6 40.6 L266.4 37.7 L267.2 36.1 L268.0 37.5 L268.8 39.8 L269.6 43.5 L270.4 44.8 L271.2 49.3 L272.0 52.7 L272.8 54.8 L273.6 57.1 L274.4 57.7 L275.2 60.3 L276.0 59.5 L276.8 58.4 L277.6 58.4 L278.4 58.8 L279.2 57.0 L280.0 56.2 L280.8 54.0 L281.6 54.1 L282.4 52.2 L283.2 49.8 L284.0 48.3 L284.8 46.4 L285.6 45.0 L286.4 42.8 L287.2 39.7 L288.0 39.8 L288.8 38.3 L289.6 36.2 L290.4 35.1 L291.2 35.0 L292.0 37.9 L292.8 39.6 L293.6 42.5 L294.4 48.5 L295.2 53.3 L296.0 55.4 L296.8 55.7 L297.6 57.5 L298.4 60.4 L299.2 61.7 L300.0 59.4 L300.8 59.3 L301.6 60.2 L302.4 62.0 L303.2 60.1 L304.0 60.1 L304.8 62.0 L305.6 62.7 L306.4 61.6 L307.2 62.9 L308.0 64.4 L308.8 64.1 L309.6 63.9 L310.4 62.7 L311.2 64.0 L312.0 63.7 L312.8 62.3 L313.6 58.9 L314.4 60.1 L315.2 58.1 L316.0 58.5 L316.8 57.7 L317.6 57.3 L318.4 57.7 L319.2 57.2 L320.0 56.6 L320.8 57.4 L321.6 57.1 L322.4 56.0 L323.2 55.8 L324.0 55.0 L324.8 55.8 L325.6 55.2 L326.4 52.6 L327.2 53.1 L328.0 54.0 L328.8 52.5 L329.6 52.2 L330.4 51.7 L331.2 53.9 L332.0 53.7 L332.8 52.5 L333.6 52.1 L334.4 52.2 L335.2 52.2 L336.0 51.0 L336.8 48.3 L337.6 49.0 L338.4 51.2 L339.2 51.7 L340.0 52.0 L340.8 50.2 L341.6 51.7 L342.4 52.2 L343.2 51.8 L344.0 53.4 L344.8 53.2 L345.6 51.2 L346.4 50.4 L347.2 51.3 L348.0 51.6 L348.8 51.3 L349.6 48.8 L350.4 49.4 L351.2 50.1 L352.0 50.7 L352.8 49.2 L353.6 49.8 L354.4 51.5 L355.2 50.4 L356.0 49.5 L356.8 51.8 L357.6 51.8 L358.4 51.3 L359.2 49.8 L360.0 51.6 L360.8 52.6 L361.6 52.0 L362.4 50.3 L363.2 50.6 L364.0 52.2 L364.8 52.1 L365.6 50.7 L366.4 50.8 L367.2 50.7 L368.0 51.4 L368.8 51.0 L369.6 51.5 L370.4 53.1 L371.2 53.5 L372.0 52.7 L372.8 53.7 L373.6 54.9 L374.4 55.9 L375.2 55.4 L376.0 53.6 L376.8 54.0 L377.6 56.3 L378.4 55.1 L379.2 54.0 L380.0 54.3 L380.8 55.5 L381.6 56.8 L382.4 56.5 L383.2 57.4 L384.0 58.3 L384.8 58.8 L385.6 58.5 L386.4 60.2 L387.2 60.2 L388.0 59.9 L388.8 59.7 L389.6 59.1 L390.4 58.6 L391.2 59.1 L392.0 57.4 L392.8 58.0 L393.6 59.4 L394.4 59.9 L395.2 59.5 L396.0 59.5 L396.8 60.1 L397.6 62.1 L398.4 60.4 L399.2 60.3 L400.0 61.3 L400.8 60.8 L401.6 60.7 L402.4 60.1 L403.2 62.2 L404.0 63.2 L404.8 64.6 L405.6 63.4 L406.4 63.9 L407.2 65.8 L408.0 66.2 L408.8 64.2 L409.6 64.4 L410.4 63.9 L411.2 62.6 L412.0 61.1 L412.8 59.3 L413.6 60.1 L414.4 58.2 L415.2 55.8 L416.0 56.7 L416.8 56.0 L417.6 55.7 L418.4 53.6 L419.2 52.1 L420.0 52.0 L420.8 52.5 L421.6 51.6 L422.4 50.3 L423.2 51.3 L424.0 52.3 L424.8 50.7 L425.6 51.3 L426.4 51.0 L427.2 51.8 L428.0 51.1 L428.8 51.3 L429.6 52.0 L430.4 51.9 L431.2 52.1 L432.0 51.0 L432.8 50.8 L433.6 50.5 L434.4 50.5 L435.2 49.9 L436.0 49.6 L436.8 51.0 L437.6 50.7 L438.4 48.3 L439.2 48.8 L440.0 50.8 L440.8 50.4 L441.6 49.5 L442.4 48.5 L443.2 51.6 L444.0 51.6 L444.8 51.1 L445.6 50.9 L446.4 52.4 L447.2 50.8 L448.0 51.4 L448.8 50.0 L449.6 52.0 L450.4 52.2 L451.2 52.8 L452.0 51.6 L452.8 54.9 L453.6 56.2 L454.4 57.3 L455.2 56.4 L456.0 57.9 L456.8 60.2 L457.6 59.5 L458.4 59.3 L459.2 59.9 L460.0 63.3 L460.8 63.0 L461.6 63.8 L462.4 62.8 L463.2 65.8 L464.0 66.1 L464.8 67.4 L465.6 66.6 L466.4 69.0 L467.2 69.4 L468.0 69.4 L468.8 69.9 L469.6 72.1 L470.4 72.7 L471.2 71.1 L472.0 71.9 L472.8 72.4 L473.6 74.1 L474.4 73.3 L475.2 74.3 L476.4 77.5 L478.2 76.5 L480.0 81.3 L482.0 81.5 L483.4 87.4 L484.7 87.7 L486.6 93.4 L488.3 89.8 L489.7 95.3 L491.5 92.6 L493.0 96.8 L494.9 89.3 L496.1 94.2 L497.4 83.5 L499.4 86.3 L500.9 74.9 L502.2 76.4 L504.1 62.6 L505.9 73.0 L507.1 63.4 L508.8 65.3 L510.5 58.1 L511.8 63.8 L513.6 48.1 L514.8 56.5 L516.2 38.9 L517.4 48.2 L518.7 39.6 L520.8 41.8 L522.3 18.8 L524.4 37.6 L525.9 21.2 L527.6 25.9 L529.6 9.5 L531.4 30.1 L532.6 12.1 L534.3 25.5 L536.0 5.4 L537.3 20.5 L538.5 13.2 L540.5 30.7 L542.1 13.6 L543.4 29.5 L544.9 17.2 L546.3 35.6 L548.1 21.2 L549.7 43.2 L551.0 20.0 L552.9 45.2 L554.1 29.2 L555.4 48.2 L556.6 34.3 L558.4 53.3 L559.6 37.4 L561.2 50.4 L562.4 44.0 L564.0 50.4 L565.8 38.7 L567.4 56.3 L569.0 41.0 L570.6 64.2 L572.1 47.5 L573.8 64.5 L575.0 48.7 L576.6 66.2 L577.9 48.6 L579.9 64.9 L581.9 55.9 L583.1 66.4 L584.3 50.9 L586.1 73.7 L587.8 58.2 L588.9 70.6 L590.7 50.9 L592.8 66.1 L594.3 48.0 L595.7 65.4 L597.4 48.3 L599.5 55.2 L600.8 45.6 L602.2 60.7 L603.5 46.3 L605.2 57.0 L606.8 45.0 L608.2 55.9 L609.7 39.7 L610.8 49.8 L612.2 36.9 L614.3 47.0 L616.0 32.2 L617.4 37.2 L619.4 30.3 L620.8 39.4 L622.2 28.9 L623.3 40.1 L624.6 36.4 L625.9 43.8 L627.2 35.9 L629.2 45.6 L630.5 39.1 L631.9 48.5 L633.6 41.1 L635.6 50.2 L637.0 42.4 L638.9 50.8 L640.3 45.1 L642.0 51.8 L643.7 46.3 L645.7 56.0 L647.6 51.1 L649.2 55.2 L651.1 56.4 L652.6 60.5 L654.1 57.1 L656.2 59.5 L657.8 59.3 L659.7 60.2 L661.1 59.7 L663.1 62.6 L664.8 60.2 L666.2 61.7 L668.2 61.5 L669.0 61.8 L669.8 62.1 L670.6 63.8 L671.4 65.5 L672.2 64.8 L673.0 64.0 L673.8 62.7 L674.6 63.6 L675.4 63.9 L676.2 62.0 L677.0 61.5 L677.8 63.6 L678.6 63.1 L679.4 62.7 L680.2 63.0 L681.0 63.4 L681.8 63.4 L682.6 62.5 L683.4 61.4 L684.2 63.1 L685.0 62.1 L685.8 61.3 L686.6 61.0 L687.4 59.7 L688.2 60.0 L689.0 59.3 L689.8 57.5 L690.6 59.9 L691.4 58.8 L692.2 58.1 L693.0 56.9 L693.8 57.2 L694.6 57.9 L695.4 56.2 L696.2 55.9 L697.0 55.6 L697.8 56.9 L698.6 54.9 L699.4 53.1 L700.2 51.8 L701.0 51.9 L701.8 48.9 L702.6 47.2 L703.4 48.2 L704.2 47.7 L705.0 48.2 L705.8 47.0 L706.6 46.6 L707.4 47.9 L708.2 48.3 L709.0 46.1 L709.8 45.1 L710.6 45.5 L711.4 46.6 L712.2 45.7 L713.0 44.6 L713.8 44.0 L714.6 45.1 L715.4 46.0 L716.2 45.4 L717.0 47.4 L717.8 48.7 L718.6 48.2 L719.4 48.3 L720.2 50.9 L721.0 51.0 L721.8 51.5 L722.6 50.7 L723.4 51.1 L724.2 52.0 L725.0 52.3 L725.8 51.3 L726.6 51.8 L727.4 54.3 L728.2 55.2 L729.0 53.7 L729.8 55.7 L730.6 56.3 L731.4 57.5 L732.2 56.5 L733.0 57.3 L733.8 58.4 L734.6 58.7 L735.4 58.7 L736.2 58.7 L737.0 59.5 L737.8 60.8 L738.6 60.5 L739.4 60.1 L740.2 63.5 L741.0 62.7 L741.8 62.7 L742.6 61.2 L743.4 62.2 L744.2 62.2 L745.0 62.7 L745.8 61.5 L746.6 62.3 L747.4 63.0 L748.2 62.8 L749.0 61.7 L749.8 63.1 L750.6 64.8 L751.4 64.3 L752.2 63.7 L753.0 64.6 L753.8 64.0 L754.6 65.0 L755.4 63.8 L756.2 65.3 L757.0 65.6 L757.8 64.8 L758.6 65.0 L759.4 65.8 L760.2 68.1 L761.0 68.1 L761.8 67.7 L762.6 68.4 L763.4 71.2 L764.2 72.4 L765.0 71.4 L765.8 73.0 L766.6 72.3 L767.4 73.6 L768.2 73.5 L769.0 72.5 L769.8 74.5 L770.6 75.2 L771.4 76.1 L772.2 75.8 L773.0 77.9 L773.8 79.2 M775.0 53.7 L775.8 52.0 L776.6 52.4 L777.4 53.7 L778.2 51.5 L779.0 50.6 L779.8 51.0 L780.6 51.7 L781.4 49.4 L782.2 47.1 L783.0 47.5 L783.8 48.9 L784.6 47.1 L785.4 46.4 L786.2 45.8 L787.0 46.6 L787.8 45.4 L788.6 43.5 L789.4 43.1 L790.2 45.1 L791.0 43.8 L791.8 42.6 L792.6 42.6 L793.4 44.7 L794.2 45.9 L795.0 44.6 L795.8 43.9 L796.6 45.4 L797.4 46.0 L798.2 45.5 L799.0 46.4 L799.8 47.5 L800.6 47.6 L801.4 47.8 L802.2 48.6 L803.0 49.2 L803.8 49.2 L804.6 49.1 L805.4 48.1 L806.2 49.8 L807.0 49.8 L807.8 50.8 L808.6 49.4 L809.4 51.0 L810.2 53.0 L811.0 53.7 L811.8 54.7 L812.6 55.3 L813.4 57.2 L814.2 57.6 L815.0 56.5 L815.8 57.4 L816.6 58.6 L817.4 59.1 L818.2 59.4 L819.0 60.5 L819.8 60.5 L820.6 61.3 L821.4 61.1 L822.2 63.2 L823.0 64.1 L823.8 64.4 L824.6 63.7 L825.4 65.0 L826.2 65.9 L827.0 65.5 L827.8 63.4 L828.6 63.3 L829.4 65.5 L830.2 64.8 L831.0 64.4 L831.8 64.2 L832.6 65.6 L833.4 67.8 L834.2 67.5 L835.0 65.4 L835.8 67.0 L836.6 67.6 L837.4 66.3 L838.2 65.8 L839.0 65.3 L839.8 67.5 L840.6 65.9 L841.4 64.8 L842.2 65.1 L843.0 63.5 L843.8 63.8 L844.6 63.5 L845.4 62.0 L846.2 63.1 L847.0 62.7 L847.8 62.0 L848.6 61.8 L849.4 63.6 L850.2 63.4 L851.0 62.6 L851.8 62.0 L852.6 61.9 L853.4 61.8 L854.2 58.9 L855.0 57.8 L855.8 58.9 L856.6 56.8 L857.4 56.2 L858.2 57.4 L859.0 58.4 L859.8 58.8 L860.6 57.8 L861.4 56.9 L862.2 56.8 L863.0 58.7 L863.8 56.9 L864.6 54.9 L865.4 55.4 L866.2 55.4 L867.0 55.6 L867.8 52.6 L868.6 51.6" stroke="#5c4389" fill="none" stroke-width="1.1" stroke-linejoin="round"/><line x1="434.5" y1="0" x2="434.5" y2="298" stroke="#5c5c60" stroke-width="1"/><line x1="774.5" y1="0" x2="774.5" y2="298" stroke="#67657a" stroke-width="1"/></svg>
<div class="ch" style="top:129px">Fp2</div>
<div class="ch" style="top:196px">Fp1</div>
<div class="ch" style="top:262px">O2</div>
<div class="ch" style="top:328px">O1</div>
<div class="dot" style="left:52.5px;top:131px;width:7.5px;height:7.5px;background:#138e22"></div>
<div class="dot" style="left:52.5px;top:197.5px;width:7.5px;height:7.5px;background:#138e22"></div>
<div class="dot" style="left:51px;top:263px;width:10px;height:10px;background:#f2ee10;border:1.5px solid #141414"></div>
<div class="dot" style="left:51px;top:329px;width:10px;height:10px;background:#f2ee10;border:1.5px solid #141414"></div>
<div class="lbl" style="top:126px;width:53px;background:rgba(90,56,138,0.86);color:#f0ecf6">82 µV</div>
<div class="lbl" style="top:192.5px;width:53px;background:rgba(58,122,120,0.86);color:#e4f6f2">75 µV</div>
<div class="lbl" style="top:259px;width:57px;background:rgba(86,116,60,0.9);color:#0c1408">225 µV</div>
<div class="lbl" style="top:325.5px;width:57px;background:rgba(118,50,50,0.9);color:#f4ecec">231 µV</div>
<div class="a" style="left:860px;top:354px;font:bold 12px/14px 'Liberation Sans',sans-serif;color:#ececec;white-space:nowrap">202.5 sec</div>

<!-- headers 2 -->
<svg class="a" style="left:0;top:0" width="30" height="656"><polygon points="12,414.40000000000003 18.6,417.8 12,421.2" fill="#f0f0f0"/></svg><div class="hdr" style="top:412px">Digital</div>
<svg class="a" style="left:0;top:0" width="30" height="656"><polygon points="12,431.1 18.6,434.5 12,437.9" fill="#f0f0f0"/></svg><div class="hdr" style="top:428px">Accelerometer</div>
<svg class="a" style="left:0;top:0" width="30" height="656"><polygon points="12.2,448.3 18.8,448.3 15.5,454.1" fill="#f0f0f0"/></svg><div class="hdr" style="top:445px">Power</div>

<!-- power frame -->
<div class="frame" style="left:20px;top:461px;width:909px;height:123px"></div>
<div class="a" style="left:27px;top:467px;width:895px;height:92px;background:#262527;border:1px solid #3d5b52;border-bottom:none"></div>
<svg width="893" height="92" style="position:absolute;left:28px;top:467px"><line x1="64.5" y1="0" x2="64.5" y2="92" stroke="#2e2d31" stroke-width="1"/><line x1="64.5" y1="85" x2="64.5" y2="92" stroke="#3d3d41" stroke-width="1"/><line x1="136.5" y1="0" x2="136.5" y2="92" stroke="#2e2d31" stroke-width="1"/><line x1="136.5" y1="85" x2="136.5" y2="92" stroke="#3d3d41" stroke-width="1"/><line x1="208.5" y1="0" x2="208.5" y2="92" stroke="#2e2d31" stroke-width="1"/><line x1="208.5" y1="85" x2="208.5" y2="92" stroke="#3d3d41" stroke-width="1"/><line x1="280.5" y1="0" x2="280.5" y2="92" stroke="#2e2d31" stroke-width="1"/><line x1="280.5" y1="85" x2="280.5" y2="92" stroke="#3d3d41" stroke-width="1"/><line x1="353.5" y1="0" x2="353.5" y2="92" stroke="#2e2d31" stroke-width="1"/><line x1="353.5" y1="85" x2="353.5" y2="92" stroke="#3d3d41" stroke-width="1"/><line x1="425.5" y1="0" x2="425.5" y2="92" stroke="#2e2d31" stroke-width="1"/><line x1="425.5" y1="85" x2="425.5" y2="92" stroke="#3d3d41" stroke-width="1"/><line x1="497.5" y1="0" x2="497.5" y2="92" stroke="#2e2d31" stroke-width="1"/><line x1="497.5" y1="85" x2="497.5" y2="92" stroke="#3d3d41" stroke-width="1"/><line x1="569.5" y1="0" x2="569.5" y2="92" stroke="#2e2d31" stroke-width="1"/><line x1="569.5" y1="85" x2="569.5" y2="92" stroke="#3d3d41" stroke-width="1"/><line x1="642.5" y1="0" x2="642.5" y2="92" stroke="#2e2d31" stroke-width="1"/><line x1="642.5" y1="85" x2="642.5" y2="92" stroke="#3d3d41" stroke-width="1"/><line x1="714.5" y1="0" x2="714.5" y2="92" stroke="#5a5a5e" stroke-width="1"/><line x1="714.5" y1="85" x2="714.5" y2="92" stroke="#3d3d41" stroke-width="1"/><line x1="786.5" y1="0" x2="786.5" y2="92" stroke="#2e2d31" stroke-width="1"/><line x1="786.5" y1="85" x2="786.5" y2="92" stroke="#3d3d41" stroke-width="1"/><line x1="858.5" y1="0" x2="858.5" y2="92" stroke="#2e2d31" stroke-width="1"/><line x1="858.5" y1="85" x2="858.5" y2="92" stroke="#3d3d41" stroke-width="1"/><path d="M0.0 5.6 L1.3 13.5 L2.5 16.8 L3.9 20.9 L5.1 19.5 L6.0 21.8 L7.0 22.2 L8.5 23.6 L9.5 25.2 L11.1 27.2 L12.5 30.9 L13.3 23.5 L14.3 26.1 L15.9 28.9 L17.0 33.5 L17.9 35.9 L19.4 25.4 L20.5 32.3 L21.7 31.7 L23.2 32.9 L24.2 32.9 L25.8 30.3 L27.3 33.8 L28.5 27.2 L29.9 37.9 L31.4 38.3 L32.3 42.9 L33.5 31.9 L34.6 32.4 L36.2 38.0 L37.3 38.9 L38.6 38.0 L40.2 33.5 L41.5 38.7 L42.9 40.0 L44.1 44.8 L45.4 40.7 L46.5 42.2 L48.0 37.3 L49.1 45.1 L50.0 47.7 L51.4 44.2 L52.5 39.1 L54.0 36.4 L55.6 32.5 L57.1 49.5 L58.4 46.5 L59.5 40.1 L60.5 45.2 L61.4 42.0 L62.8 44.7 L64.3 39.7 L65.1 44.3 L66.3 48.0 L67.2 48.2 L68.7 46.8 L70.3 45.4 L71.3 41.1 L72.9 39.6 L73.7 45.2 L74.7 50.2 L76.2 40.6 L77.5 42.2 L78.9 49.7 L80.0 44.3 L81.4 47.1 L82.2 44.0 L83.0 38.9 L84.3 43.5 L85.6 42.4 L86.6 40.2 L88.1 54.7 L89.0 50.6 L89.8 50.2 L91.0 54.5 L92.3 55.8 L93.2 46.2 L94.4 49.0 L95.4 51.3 L96.5 52.4 L97.8 49.2 L99.2 50.1 L100.7 51.7 L101.5 43.6 L102.7 57.0 L103.6 53.4 L105.0 50.7 L106.1 57.1 L106.9 48.2 L108.4 53.2 L109.4 45.9 L111.0 51.0 L111.9 47.3 L113.3 48.4 L114.8 49.0 L116.1 57.2 L117.3 58.3 L118.9 54.4 L120.0 46.2 L120.9 61.5 L121.7 58.2 L123.1 54.9 L124.3 51.0 L125.6 51.1 L126.8 47.7 L127.9 51.2 L128.9 55.8 L129.9 53.0 L131.2 54.4 L132.4 45.8 L133.4 48.3 L134.7 54.9 L136.3 55.8 L137.4 54.2 L138.8 57.3 L140.1 47.4 L141.5 48.0 L142.9 45.0 L144.2 52.3 L145.3 61.0 L146.6 56.8 L148.2 42.8 L149.0 50.7 L150.1 55.3 L151.1 50.6 L152.1 51.6 L153.7 51.9 L154.5 47.7 L156.1 51.4 L157.2 49.6 L158.5 50.9 L160.1 49.4 L161.1 52.1 L162.0 60.1 L163.4 54.0 L164.4 57.6 L165.5 56.6 L166.7 50.7 L167.9 51.9 L169.1 54.9 L170.1 56.4 L170.9 62.0 L172.3 58.3 L173.2 50.0 L174.4 57.9 L175.7 54.0 L176.7 57.7 L177.6 52.9 L178.6 44.5 L179.7 55.2 L180.6 54.7 L181.9 45.5 L182.7 54.4 L183.9 56.6 L184.9 55.4 L186.5 45.5 L188.0 58.3 L188.8 53.6 L190.4 52.9 L191.3 46.2 L192.2 55.3 L193.5 48.0 L194.6 54.3 L195.6 49.7 L196.7 51.5 L198.2 58.7 L199.1 57.7 L200.4 55.3 L201.4 53.1 L202.2 54.7 L203.4 50.9 L204.3 48.1 L205.2 58.0 L206.4 51.3 L207.7 52.8 L208.6 48.6 L210.0 53.8 L211.1 54.8 L212.3 51.9 L213.7 51.9 L214.9 57.9 L216.3 60.6 L217.9 52.7 L219.3 51.4 L220.8 45.4 L222.4 52.2 L223.5 63.0 L224.9 50.8 L225.7 50.9 L227.0 58.8 L228.4 52.9 L230.0 52.5 L231.2 56.5 L232.8 52.6 L234.1 55.6 L235.6 48.1 L236.7 58.2 L237.6 56.8 L238.8 56.3 L239.7 51.3 L240.6 50.1 L241.4 57.3 L242.7 55.4 L244.2 56.8 L245.5 58.9 L246.4 52.1 L247.4 49.9 L248.8 57.8 L250.2 53.4 L251.3 52.7 L252.4 52.1 L253.6 55.6 L254.8 62.7 L256.1 57.1 L257.5 55.0 L259.1 49.0 L260.2 55.3 L261.6 55.9 L262.8 45.8 L263.8 49.3 L264.8 55.1 L265.9 48.5 L266.8 50.7 L268.0 61.4 L269.2 51.6 L270.4 59.7 L271.8 60.6 L272.9 51.1 L273.9 57.6 L275.4 49.2 L276.4 61.2 L277.3 49.3 L278.3 54.8 L279.8 54.7 L280.8 55.1 L281.8 53.4 L282.7 50.2 L283.7 56.9 L285.0 54.1 L286.1 62.4 L287.1 58.4 L288.4 58.9 L289.6 64.0 L290.9 64.1 L291.7 57.6 L292.9 53.3 L294.1 62.7 L295.4 58.3 L296.7 57.0 L298.1 62.5 L299.4 55.3 L300.4 61.5 L301.8 66.2 L303.0 61.6 L304.0 56.6 L304.8 58.7 L306.0 65.5 L307.1 68.4 L308.1 62.8 L309.1 64.1 L310.0 57.6 L311.0 58.0 L311.9 61.8 L313.0 63.7 L314.4 66.5 L315.6 71.1 L316.5 65.6 L317.4 68.8 L318.4 62.6 L319.6 65.0 L320.9 69.5 L322.0 68.3 L323.5 66.6 L324.3 72.6 L325.5 73.1 L326.8 68.4 L327.7 72.2 L329.3 72.0 L330.7 72.9 L331.6 71.4 L332.7 73.2 L333.8 72.8 L336.0 80.0 L592.0 85.0 L893.0 86.0" stroke="#8a4f9a" fill="none" stroke-width="1.1" stroke-linejoin="round"/><path d="M0.0 2.7 L0.8 6.3 L2.4 13.9 L3.7 16.4 L4.8 18.3 L6.4 18.1 L7.4 13.7 L8.8 16.5 L10.3 22.7 L11.8 22.8 L13.1 23.7 L14.6 27.8 L15.8 32.2 L17.4 23.5 L18.7 24.8 L19.7 21.5 L21.2 24.5 L22.8 34.2 L24.1 32.7 L25.5 34.2 L26.4 33.3 L27.2 30.3 L28.8 24.2 L29.9 29.2 L31.2 32.6 L32.3 28.1 L33.6 28.5 L34.8 35.5 L36.0 28.2 L36.8 26.3 L38.4 28.3 L39.6 34.6 L41.1 36.1 L42.2 30.1 L43.1 33.6 L44.3 30.3 L45.4 30.1 L46.4 35.3 L47.2 25.0 L48.5 30.6 L49.5 31.8 L50.6 31.1 L52.1 36.5 L53.6 30.5 L54.8 27.5 L56.3 32.1 L57.7 26.5 L59.1 34.1 L60.1 34.7 L61.4 25.8 L63.0 37.9 L64.3 33.8 L65.4 36.2 L66.5 38.8 L67.5 43.6 L68.6 37.2 L69.5 35.7 L71.0 39.1 L71.9 36.4 L73.1 39.3 L74.1 34.4 L75.6 44.6 L77.1 44.0 L78.6 42.1 L79.4 43.0 L80.5 46.9 L81.9 42.4 L82.9 39.2 L83.9 43.8 L85.2 45.8 L86.1 49.1 L87.0 41.0 L88.2 44.1 L89.4 44.6 L90.2 45.6 L91.5 45.5 L93.1 47.9 L94.3 44.1 L95.2 42.4 L96.7 53.9 L97.5 43.1 L98.4 51.5 L99.9 51.8 L101.0 44.8 L102.4 45.6 L103.5 48.0 L104.4 50.8 L105.8 44.3 L107.2 51.0 L108.3 48.1 L109.8 48.9 L111.2 44.6 L112.1 49.4 L113.2 49.9 L114.2 38.9 L115.1 47.7 L116.4 52.5 L117.6 44.9 L119.0 58.8 L120.4 50.4 L121.8 49.9 L122.7 47.4 L123.6 39.5 L125.1 48.8 L126.3 44.4 L127.3 44.6 L128.9 55.3 L130.4 46.9 L131.9 47.2 L132.9 46.4 L133.9 57.9 L134.9 52.6 L135.7 48.6 L136.9 51.1 L138.0 51.4 L139.1 53.5 L140.2 50.8 L141.4 46.2 L142.9 53.3 L143.7 48.5 L145.3 46.7 L146.2 49.3 L147.2 48.7 L148.0 51.6 L149.6 50.4 L150.8 47.8 L152.3 48.1 L153.3 49.6 L154.4 54.3 L155.6 47.0 L156.9 55.6 L158.3 51.6 L159.7 47.6 L160.5 52.3 L161.4 52.3 L162.8 53.5 L163.8 44.2 L165.1 50.9 L165.9 54.6 L166.9 47.3 L167.9 46.4 L169.0 41.2 L170.1 47.6 L171.2 49.1 L172.8 43.0 L173.8 47.4 L175.3 50.7 L176.5 47.3 L177.8 45.2 L178.8 47.8 L180.1 45.8 L181.2 56.0 L182.7 47.8 L183.9 48.9 L184.8 50.2 L186.1 49.2 L187.1 50.8 L188.5 48.4 L189.8 50.7 L190.9 52.7 L192.2 50.5 L193.4 51.1 L194.8 55.9 L196.0 58.7 L197.0 53.8 L198.2 53.0 L199.1 54.9 L200.1 53.2 L201.3 44.8 L202.5 52.8 L203.5 54.3 L204.3 58.1 L205.2 57.8 L206.5 54.2 L208.0 48.4 L209.2 48.4 L210.5 52.0 L211.7 58.4 L212.5 48.3 L213.4 55.5 L214.9 55.6 L216.5 49.2 L217.8 49.1 L219.4 50.9 L220.9 47.7 L221.8 52.7 L223.1 54.1 L224.1 48.5 L225.4 52.4 L226.4 49.4 L227.7 59.0 L228.8 53.8 L230.3 49.6 L231.1 52.6 L232.0 51.5 L233.4 58.8 L234.7 50.0 L236.1 57.7 L237.2 56.2 L238.2 54.5 L239.1 51.0 L240.6 53.3 L241.7 57.7 L242.5 48.5 L244.0 54.3 L245.5 47.9 L246.7 54.8 L247.7 53.0 L249.2 53.6 L250.3 50.9 L251.2 53.3 L252.3 56.5 L253.2 51.2 L254.7 50.4 L255.9 46.7 L257.0 55.9 L258.0 55.5 L259.0 55.4 L260.4 49.2 L261.4 58.2 L262.3 51.8 L263.8 57.1 L264.7 53.9 L265.7 55.6 L267.3 56.1 L268.2 52.2 L269.3 51.8 L270.5 52.5 L271.9 60.0 L273.2 53.7 L274.7 49.2 L275.9 54.1 L276.8 50.8 L277.8 53.6 L278.7 54.6 L279.9 55.1 L280.9 49.5 L281.9 52.4 L282.8 49.1 L284.1 51.0 L285.4 53.9 L286.4 54.4 L287.8 53.8 L289.0 56.7 L290.4 57.3 L291.6 57.1 L293.1 53.9 L294.6 58.5 L295.4 55.1 L296.9 62.2 L298.4 55.8 L299.5 60.3 L300.4 56.7 L302.0 64.8 L303.0 64.3 L304.6 61.8 L306.0 53.6 L307.4 63.3 L308.8 50.4 L310.2 61.4 L311.2 59.5 L312.3 62.2 L313.8 57.0 L315.2 62.8 L316.1 59.9 L317.3 65.2 L318.6 67.6 L319.8 63.0 L321.2 59.8 L322.5 64.4 L323.7 64.8 L325.1 68.9 L326.2 71.0 L327.8 66.8 L329.2 67.9 L330.0 69.5 L331.3 71.4 L332.7 68.8 L333.6 72.2 L334.7 72.1 L336.0 80.5 L592.0 85.5 L893.0 86.5" stroke="#b04842" fill="none" stroke-width="1.1" stroke-linejoin="round"/><path d="M0.0 9.4 L1.5 13.3 L2.4 16.6 L3.6 18.1 L4.5 20.2 L5.5 21.8 L6.6 23.1 L8.0 21.9 L9.2 14.9 L10.2 21.0 L11.1 23.2 L12.4 17.7 L13.7 27.7 L15.1 24.1 L16.2 20.0 L17.3 23.3 L18.1 19.9 L19.4 27.9 L20.6 25.8 L21.5 25.9 L22.6 29.5 L23.5 26.4 L24.3 32.4 L25.6 30.6 L27.1 28.6 L28.1 34.6 L29.1 32.8 L30.1 27.6 L31.0 34.6 L32.5 28.1 L33.5 26.3 L34.7 33.3 L36.3 42.4 L37.1 47.1 L38.3 45.6 L39.6 40.3 L41.2 43.6 L42.4 31.6 L44.0 41.3 L45.6 38.0 L46.7 42.6 L47.9 43.8 L48.8 51.7 L49.8 38.8 L50.7 40.7 L51.9 43.0 L53.4 43.7 L54.9 48.4 L56.1 39.8 L57.5 52.0 L59.0 43.6 L60.4 41.6 L61.8 43.8 L62.9 43.7 L64.0 46.9 L65.2 41.4 L66.7 51.2 L67.8 50.6 L69.0 48.9 L70.6 45.0 L71.4 43.1 L72.4 46.1 L73.7 43.9 L75.1 49.3 L75.9 43.6 L76.8 53.8 L78.3 50.9 L79.2 55.2 L80.4 48.1 L81.7 50.6 L82.9 48.2 L84.2 45.7 L85.4 48.0 L86.2 59.0 L87.7 54.0 L89.2 47.5 L90.5 48.6 L91.6 49.4 L92.6 48.3 L93.7 61.5 L94.8 45.4 L96.0 55.7 L97.3 52.1 L98.1 55.6 L99.1 51.8 L100.3 60.5 L101.2 50.6 L102.4 53.2 L103.6 54.7 L105.1 50.4 L106.1 58.6 L106.9 52.3 L108.4 52.4 L109.3 56.8 L110.7 58.7 L111.9 56.7 L113.2 52.8 L114.7 54.9 L116.1 58.8 L117.6 63.2 L118.5 59.0 L119.4 54.2 L120.8 47.3 L122.1 54.8 L123.5 56.0 L124.8 48.7 L125.8 54.8 L127.3 55.0 L128.3 50.5 L129.6 55.3 L130.8 56.5 L131.9 50.4 L133.2 53.5 L134.3 44.6 L135.8 63.7 L136.7 52.5 L137.8 55.0 L138.6 46.3 L139.7 52.8 L141.0 47.2 L141.9 52.8 L143.0 54.7 L144.1 56.4 L145.3 49.2 L146.2 51.6 L147.4 59.6 L148.3 56.4 L149.9 49.3 L151.1 51.1 L152.4 51.1 L154.0 60.1 L155.1 53.5 L156.0 56.4 L157.1 50.8 L157.9 58.2 L159.5 55.1 L160.9 52.8 L161.9 48.5 L162.8 53.2 L164.1 53.5 L165.3 52.4 L166.2 53.8 L167.4 58.0 L168.4 59.0 L169.7 54.5 L170.9 48.9 L171.9 48.1 L172.9 63.7 L173.9 49.5 L175.4 54.8 L176.4 55.5 L177.8 54.5 L179.1 56.6 L180.4 53.4 L182.0 53.8 L183.5 53.1 L185.1 60.7 L186.0 59.8 L186.8 56.7 L188.4 48.8 L189.7 51.8 L191.0 54.8 L192.6 50.1 L193.5 48.5 L194.9 55.0 L196.4 53.6 L197.3 55.5 L198.6 56.6 L199.5 55.3 L201.0 55.3 L202.4 50.6 L203.8 53.2 L205.1 60.1 L206.2 61.0 L207.5 46.7 L208.6 54.8 L210.1 58.7 L211.4 57.4 L212.7 57.1 L214.2 53.3 L215.6 57.2 L216.9 57.6 L218.5 52.7 L219.7 53.2 L221.1 51.1 L222.4 55.4 L223.9 58.6 L224.9 48.8 L226.2 59.1 L227.8 50.5 L229.3 59.7 L230.4 59.9 L231.4 46.5 L232.8 56.4 L233.7 56.6 L235.2 60.5 L236.3 59.4 L237.3 61.0 L238.2 46.8 L239.6 50.0 L241.0 59.8 L242.3 61.1 L243.7 55.7 L245.2 57.5 L246.3 56.7 L247.7 52.6 L248.7 60.7 L249.9 59.5 L251.4 52.3 L252.5 60.7 L253.9 61.2 L255.4 64.8 L256.2 61.9 L257.6 52.1 L258.5 56.8 L259.8 50.7 L261.3 63.1 L262.9 55.8 L263.8 56.3 L265.0 62.6 L266.6 54.2 L267.9 53.7 L269.4 52.6 L270.7 61.9 L271.8 56.8 L272.6 60.1 L273.7 57.6 L274.9 59.8 L276.0 64.6 L277.3 55.1 L278.8 58.1 L280.1 60.4 L281.1 62.7 L282.6 58.2 L283.6 63.5 L284.9 62.2 L285.9 69.0 L287.3 54.7 L288.9 62.2 L290.2 59.9 L291.6 60.0 L292.9 57.0 L294.1 61.7 L295.2 60.1 L296.3 61.9 L297.1 59.6 L298.0 64.9 L299.5 64.9 L300.6 67.1 L301.7 66.0 L302.9 62.7 L304.3 58.8 L305.6 67.8 L307.1 58.7 L308.5 63.7 L310.0 69.9 L311.4 64.7 L312.8 58.4 L314.1 65.8 L315.3 66.0 L316.6 74.1 L317.8 65.7 L318.8 70.9 L319.7 66.8 L320.6 71.6 L321.4 67.9 L323.0 67.6 L324.5 69.6 L325.5 70.8 L326.8 72.6 L327.9 73.7 L328.9 73.1 L330.0 77.2 L331.6 76.1 L333.1 78.9 L334.0 81.7 L336.0 81.5 L592.0 87.0 L893.0 89.0" stroke="#8c9c3e" fill="none" stroke-width="1.1" stroke-linejoin="round"/><path d="M0.0 2.9 L0.9 6.2 L2.5 16.1 L3.4 18.7 L4.8 20.2 L6.2 26.4 L7.6 15.3 L9.2 26.8 L10.1 14.5 L11.5 24.2 L12.6 22.7 L13.5 36.0 L14.9 28.8 L16.0 25.9 L17.0 24.6 L18.5 28.0 L20.1 26.1 L20.9 37.8 L21.8 26.7 L23.3 24.7 L24.9 33.6 L26.3 29.7 L27.8 36.7 L28.7 35.7 L29.6 27.5 L31.2 34.8 L32.1 24.4 L33.5 34.4 L34.8 35.5 L35.8 41.3 L37.1 33.7 L38.5 33.4 L39.6 29.5 L40.6 38.9 L41.6 33.8 L43.1 36.1 L44.1 37.4 L45.2 39.6 L46.3 32.4 L47.1 41.3 L48.7 37.8 L50.0 32.7 L51.2 36.8 L52.2 42.7 L53.2 39.8 L54.8 44.7 L56.2 41.1 L57.2 41.2 L58.4 40.5 L59.7 38.4 L61.3 42.2 L62.7 46.9 L63.7 42.4 L64.5 39.3 L65.7 50.0 L67.2 46.8 L68.4 46.4 L69.6 42.8 L70.5 51.8 L71.4 47.0 L72.9 39.2 L73.7 43.1 L75.3 46.1 L76.2 43.9 L77.1 44.3 L78.6 46.2 L79.8 45.6 L81.1 43.7 L82.3 44.5 L83.8 43.9 L85.3 49.4 L86.3 44.5 L87.2 55.0 L88.2 55.8 L89.7 48.8 L90.7 53.9 L91.8 48.4 L93.3 43.1 L94.3 48.6 L95.3 50.4 L96.9 45.0 L97.9 47.6 L99.3 48.6 L100.2 47.4 L101.1 52.3 L102.1 43.7 L103.1 47.6 L104.5 55.5 L105.5 48.4 L107.0 52.5 L108.3 52.8 L109.6 48.9 L110.8 53.6 L111.8 48.6 L113.3 54.9 L114.3 48.9 L115.2 41.7 L116.3 53.6 L117.5 47.7 L118.3 49.3 L119.6 58.6 L120.6 48.9 L122.0 53.2 L123.1 45.9 L124.1 48.8 L125.0 44.7 L126.0 56.4 L127.5 55.7 L128.7 45.8 L129.6 46.6 L130.8 43.0 L131.7 53.4 L133.2 54.3 L134.7 55.1 L135.6 50.4 L136.8 50.9 L138.0 55.4 L139.5 49.7 L140.9 53.0 L141.8 47.8 L143.1 55.3 L144.0 54.7 L145.3 52.1 L146.3 41.1 L147.2 41.4 L148.2 56.3 L149.4 50.0 L150.6 52.1 L151.7 44.6 L153.0 52.4 L154.0 48.2 L155.4 47.2 L156.2 50.0 L157.5 57.2 L158.7 45.7 L160.1 50.3 L161.5 52.9 L162.8 42.7 L163.7 45.8 L165.1 57.3 L166.4 53.1 L167.8 53.1 L168.9 55.5 L169.9 61.4 L171.4 44.2 L172.9 44.5 L173.8 52.7 L175.0 59.6 L176.2 51.5 L177.5 46.2 L178.8 50.7 L179.7 58.1 L181.0 52.4 L181.8 49.6 L183.4 53.8 L184.4 56.5 L185.3 51.8 L186.8 53.5 L188.2 52.4 L189.3 49.7 L190.1 58.4 L191.7 43.1 L193.2 48.5 L194.1 49.0 L194.9 44.6 L196.5 45.1 L197.6 43.9 L198.6 51.1 L200.0 48.8 L201.1 49.8 L202.1 54.4 L203.7 55.1 L205.1 59.2 L206.0 52.8 L207.3 60.2 L208.8 48.3 L210.4 51.9 L211.4 51.9 L212.7 45.3 L213.7 47.7 L215.2 48.0 L216.1 50.3 L217.2 46.1 L218.5 52.3 L219.8 52.1 L220.9 49.4 L222.5 50.6 L224.0 48.6 L225.5 51.2 L226.6 43.4 L228.2 49.5 L229.3 51.4 L230.1 61.7 L231.2 46.3 L232.8 56.6 L234.4 56.9 L235.7 56.8 L236.5 58.4 L237.9 48.7 L239.2 50.7 L240.1 58.9 L241.6 49.2 L242.6 54.8 L244.1 60.4 L245.4 54.2 L246.4 58.4 L247.6 60.0 L248.5 52.6 L250.1 57.2 L250.9 51.4 L252.2 53.3 L253.7 56.2 L254.9 56.1 L256.5 57.3 L257.5 51.5 L258.4 55.1 L259.3 58.7 L260.4 56.2 L261.8 58.8 L262.7 47.6 L264.0 56.9 L265.1 57.5 L266.2 57.2 L267.1 51.4 L268.4 54.4 L269.3 63.8 L270.2 58.1 L271.6 56.4 L272.5 48.4 L273.5 49.7 L274.9 53.5 L276.4 45.4 L277.7 51.9 L278.6 57.1 L279.4 53.4 L280.3 52.8 L281.5 59.0 L283.1 60.3 L284.2 58.3 L285.2 56.6 L286.7 61.7 L287.9 54.8 L288.7 57.3 L289.7 56.3 L291.1 56.4 L292.7 55.2 L294.0 56.8 L295.5 55.5 L296.3 57.7 L297.7 58.2 L299.0 55.4 L300.4 57.6 L301.3 59.7 L302.6 60.2 L303.4 67.9 L304.5 60.7 L305.5 62.6 L307.0 57.8 L308.6 64.0 L309.4 63.8 L310.4 52.8 L311.9 56.5 L313.2 68.9 L314.4 71.0 L315.8 67.8 L316.9 74.4 L318.0 67.2 L319.1 63.1 L320.2 66.1 L321.5 64.7 L322.7 65.9 L323.7 69.4 L325.1 68.2 L326.0 68.3 L327.1 67.8 L328.5 69.3 L329.8 71.6 L331.2 73.6 L332.4 71.2 L333.3 78.3 L334.2 73.4 L336.0 74.0 L592.0 80.0 L893.0 82.0" stroke="#4a9ea0" fill="none" stroke-width="1.1" stroke-linejoin="round"/><path d="M0.0 3.3 L1.5 15.8 L2.4 18.5 L3.3 17.2 L4.8 21.0 L6.0 24.0 L7.3 29.0 L8.7 29.9 L9.9 27.9 L11.4 21.8 L12.3 25.0 L13.2 31.9 L14.8 28.2 L16.1 28.6 L17.2 31.3 L18.4 33.1 L19.2 26.8 L20.1 29.8 L21.6 34.7 L23.1 33.5 L24.0 28.7 L25.2 36.1 L26.4 29.6 L27.2 34.4 L28.7 34.8 L29.8 36.7 L31.3 32.9 L32.5 33.2 L33.4 34.0 L34.3 34.6 L35.2 42.6 L36.7 41.3 L38.1 38.9 L39.7 41.3 L40.8 42.0 L42.0 44.4 L43.3 36.8 L44.5 41.5 L45.6 38.9 L46.7 37.0 L48.3 46.7 L49.4 46.1 L50.9 40.8 L52.2 37.4 L53.2 49.4 L54.2 43.7 L55.1 45.3 L55.9 38.5 L57.1 47.9 L58.1 50.9 L59.7 43.0 L60.8 43.5 L62.4 44.2 L63.5 42.9 L64.5 49.8 L65.8 48.6 L66.8 38.2 L68.3 43.6 L69.3 54.3 L70.3 50.6 L71.3 47.7 L72.6 44.0 L74.0 46.1 L75.0 51.8 L76.5 47.1 L77.9 51.3 L79.0 43.8 L79.8 50.3 L80.8 48.2 L81.9 39.0 L83.1 53.5 L84.1 51.0 L85.3 48.5 L86.9 53.1 L88.3 49.0 L89.1 51.3 L90.0 53.9 L91.2 54.3 L92.1 54.9 L93.5 46.5 L95.0 47.5 L96.6 59.2 L98.1 59.0 L99.7 53.8 L100.6 56.5 L101.4 46.1 L102.8 52.1 L103.6 45.0 L105.2 53.4 L106.8 52.7 L108.0 53.7 L109.3 55.7 L110.3 57.3 L111.4 49.0 L112.5 61.0 L113.5 60.1 L115.1 47.5 L116.0 51.1 L117.2 56.1 L118.5 55.1 L120.0 53.0 L121.5 55.1 L122.4 54.2 L123.5 56.9 L125.1 60.1 L126.3 55.9 L127.2 53.3 L128.1 61.5 L129.3 57.2 L130.6 53.9 L132.0 50.5 L133.5 56.4 L135.0 51.5 L136.5 53.3 L137.6 51.6 L138.4 53.1 L139.3 49.9 L140.8 52.1 L141.7 52.5 L142.8 52.3 L144.3 52.8 L145.1 56.5 L146.6 50.0 L147.9 53.2 L148.9 56.3 L149.8 50.3 L150.7 59.6 L151.6 55.4 L152.8 51.6 L154.1 52.2 L155.4 61.8 L157.0 49.3 L158.2 49.0 L159.1 53.6 L160.4 58.1 L161.9 53.3 L162.9 50.3 L164.5 56.4 L165.6 53.5 L167.0 51.1 L168.2 54.2 L169.2 53.4 L170.7 50.4 L172.2 54.7 L173.3 57.2 L174.2 50.1 L175.0 59.6 L176.0 47.0 L177.6 56.3 L179.0 49.4 L180.2 57.0 L181.3 54.5 L182.8 52.9 L184.1 60.0 L185.0 48.9 L186.4 55.2 L187.5 61.2 L188.3 53.4 L189.8 46.6 L190.8 47.9 L192.2 53.2 L193.3 50.1 L194.6 60.2 L195.9 53.3 L197.2 57.2 L198.6 49.7 L199.4 61.2 L200.7 46.5 L201.9 59.1 L203.4 52.3 L204.7 46.2 L206.2 50.6 L207.5 49.5 L208.7 53.2 L209.8 55.1 L210.7 57.9 L212.3 47.8 L213.5 59.3 L215.1 51.7 L216.2 52.8 L217.2 53.3 L218.3 57.8 L219.4 64.6 L220.8 56.6 L221.9 55.7 L223.2 54.0 L224.4 63.5 L225.7 47.6 L227.2 54.7 L228.1 53.6 L229.0 55.5 L230.1 50.8 L231.3 59.8 L232.7 53.8 L233.8 51.6 L234.8 49.8 L236.3 56.4 L237.9 57.9 L238.9 47.1 L239.8 59.9 L241.1 55.5 L242.0 54.3 L243.6 58.7 L244.9 50.7 L246.1 56.8 L247.2 55.6 L248.2 50.1 L249.2 48.7 L250.1 56.6 L251.4 64.2 L252.3 55.2 L253.1 52.3 L254.2 62.4 L255.3 48.5 L256.7 58.2 L257.7 55.7 L258.7 53.8 L260.3 61.7 L261.3 55.8 L262.7 61.5 L263.6 51.6 L265.0 54.6 L266.1 54.6 L267.2 61.7 L268.3 58.8 L269.9 47.1 L270.9 52.2 L272.1 55.8 L273.1 55.3 L274.0 60.8 L275.2 62.2 L276.1 54.0 L277.1 52.3 L278.0 63.0 L278.8 59.5 L279.8 54.2 L281.0 63.7 L282.5 59.2 L283.4 48.5 L284.4 56.5 L285.5 58.4 L286.3 58.2 L287.6 61.0 L288.9 54.2 L290.1 62.5 L291.3 58.5 L292.2 57.7 L293.1 65.0 L294.5 60.4 L295.4 67.3 L296.7 57.4 L298.2 60.8 L299.5 56.8 L300.6 64.1 L302.1 62.8 L303.3 62.2 L304.2 68.4 L305.2 56.7 L306.1 63.9 L307.3 62.2 L308.2 67.8 L309.5 63.8 L310.6 69.0 L311.4 60.0 L312.2 63.7 L313.1 68.6 L314.4 70.6 L315.8 66.9 L316.8 63.8 L318.2 71.4 L319.6 69.3 L320.7 69.5 L321.9 69.4 L323.2 65.0 L324.0 72.6 L325.6 71.6 L326.4 72.0 L327.2 72.0 L328.4 74.7 L330.0 74.8 L331.6 75.9 L332.7 72.6 L333.8 74.6 L336.0 79.0 L592.0 84.0 L893.0 85.0" stroke="#6a5ccc" fill="none" stroke-width="1.1" stroke-linejoin="round"/></svg>
<div class="tk" style="left:20.5px;top:388px">-10</div><div class="tk" style="left:64.5px;top:388px">-9.5</div><div class="tk" style="left:108.5px;top:388px">-9</div><div class="tk" style="left:151.5px;top:388px">-8.5</div><div class="tk" style="left:195.5px;top:388px">-8</div><div class="tk" style="left:238.5px;top:388px">-7.5</div><div class="tk" style="left:282.5px;top:388px">-7</div><div class="tk" style="left:325.5px;top:388px">-6.5</div><div class="tk" style="left:369.5px;top:388px">-6</div><div class="tk" style="left:412.5px;top:388px">-5.5</div><div class="tk" style="left:456.5px;top:388px">-5</div><div class="tk" style="left:500.5px;top:388px">-4.5</div><div class="tk" style="left:543.5px;top:388px">-4</div><div class="tk" style="left:587.5px;top:388px">-3.5</div><div class="tk" style="left:630.5px;top:388px">-3</div><div class="tk" style="left:674.5px;top:388px">-2.5</div><div class="tk" style="left:717.5px;top:388px">-2</div><div class="tk" style="left:761.5px;top:388px">-1.5</div><div class="tk" style="left:805.5px;top:388px">-1</div><div class="tk" style="left:848.5px;top:388px">-0.5</div><div class="tk" style="left:892.5px;top:388px">0</div><div class="tk" style="left:62.5px;top:563px">10</div><div class="tk" style="left:134.5px;top:563px">20</div><div class="tk" style="left:206.5px;top:563px">30</div><div class="tk" style="left:278.5px;top:563px">40</div><div class="tk" style="left:351.5px;top:563px">50</div><div class="tk" style="left:423.5px;top:563px">60</div><div class="tk" style="left:495.5px;top:563px">70</div><div class="tk" style="left:567.5px;top:563px">80</div><div class="tk" style="left:640.5px;top:563px">90</div><div class="tk" style="left:712.5px;top:563px">100</div><div class="tk" style="left:784.5px;top:563px">110</div><div class="tk" style="left:856.5px;top:563px">120</div>

<!-- sliders -->
<div class="slider" style="left:20px;width:454px">1 Hz</div>
<div class="a" style="left:24px;top:588px;width:8px;height:16px;background:#2a82ae"></div>
<div class="slider" style="left:476px;width:453px">125 Hz</div>
<div class="a" style="left:920px;top:588px;width:8px;height:16px;background:#2a82ae;border-radius:0 3px 3px 0"></div>
</div></body></html>
